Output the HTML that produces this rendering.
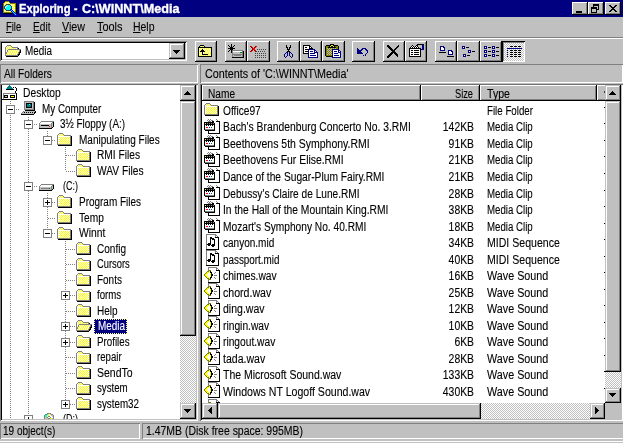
<!DOCTYPE html>
<html lang="en"><head><meta charset="utf-8"><title>Exploring - C:\WINNT\Media</title>
<style>
*{box-sizing:border-box;margin:0;padding:0}
html,body{width:623px;height:443px;overflow:hidden;background:#c0c0c0}
body{font-family:"Liberation Sans",sans-serif;font-size:12.5px;color:#000;position:relative}
#w{position:absolute;left:0;top:0;width:623px;height:443px;background:#c0c0c0;overflow:hidden;will-change:transform}
.a,.t,.btn,.tb,.tbp,.pane,.combo,.lbl,.hd,.track,svg{position:absolute}
.t{white-space:pre;line-height:16px;height:16px;transform-origin:0 0;-webkit-text-stroke:.12px currentColor}
.t.r{transform-origin:100% 0;text-align:right;width:80px}
.btn{background:#c0c0c0;box-shadow:inset -1px -1px #000,inset 1px 1px #c0c0c0,inset -2px -2px #808080,inset 2px 2px #fff}
.tb{background:#c0c0c0;box-shadow:inset -1px -1px #000,inset 1px 1px #fff,inset -2px -2px #808080}
.tbp{box-shadow:inset 1px 1px #000,inset -1px -1px #fff,inset 2px 2px #808080}
.pane{background:#fff;box-shadow:inset 0 1px #707070,inset 1px 0 #808080,inset 0 -1px #fff,inset -1px 0 #fff,inset 2px 0 #000,inset 0 -2px #c0c0c0,inset -2px 0 #c0c0c0}
.combo{background:#fff;box-shadow:inset 1px 1px #808080,inset -1px -1px #fff,inset 2px 2px #000,inset -2px -2px #c0c0c0}
.lbl{box-shadow:inset 1px 1px #808080,inset -1px -1px #fff}
.hd{background:#c0c0c0;box-shadow:inset -1px -1px #000,inset 1px 1px #fff,inset -2px -2px #808080}
.track,.tbp{background-color:#fff;background-image:linear-gradient(45deg,#c0c0c0 25%,transparent 25%,transparent 75%,#c0c0c0 75%),linear-gradient(45deg,#c0c0c0 25%,transparent 25%,transparent 75%,#c0c0c0 75%);background-size:2px 2px;background-position:0 0,1px 1px}
.clip{position:absolute;overflow:hidden}
u{text-decoration:underline}
</style></head>
<body>
<div id="w">
<div class="a" style="left:0px;top:0px;width:623px;height:17px;background:#000080"></div>
<svg style="left:2px;top:1px" width="16" height="16" viewBox="0 0 16 16" shape-rendering="crispEdges"><path fill="#808000" d="M3 0h4v1h-4zM2 1h1v1h-1zM7 1h1v1h-1zM1 2h1v1h-1zM8 2h6v1h-6zM1 3h1v1h-1zM13 3h1v1h-1zM1 4h1v1h-1zM13 4h1v1h-1zM1 5h1v1h-1zM13 5h1v1h-1zM1 6h1v1h-1zM13 6h1v1h-1zM1 7h1v1h-1zM13 7h1v1h-1zM1 8h1v1h-1zM13 8h1v1h-1zM1 9h1v1h-1zM13 9h1v1h-1zM1 10h1v1h-1zM13 10h1v1h-1zM1 11h9v1h-9zM13 11h1v1h-1z"/><path fill="#ff0" d="M3 1h1v1h-1zM5 1h1v1h-1zM2 2h1v1h-1zM4 2h1v1h-1zM6 2h1v1h-1zM3 3h1v1h-1zM8 3h1v1h-1zM10 3h1v1h-1zM12 3h1v1h-1zM2 4h1v1h-1zM10 4h1v1h-1zM12 4h1v1h-1zM10 5h1v1h-1zM12 5h1v1h-1zM11 6h1v1h-1zM10 7h1v1h-1zM12 7h1v1h-1zM2 8h1v1h-1zM11 8h1v1h-1zM3 9h1v1h-1zM12 9h1v1h-1zM2 10h1v1h-1zM4 10h1v1h-1zM6 10h1v1h-1zM8 10h1v1h-1zM12 10h1v1h-1z"/><path fill="#fff" d="M4 1h1v1h-1zM6 1h1v1h-1zM3 2h1v1h-1zM5 2h1v1h-1zM7 2h1v1h-1zM2 3h1v1h-1zM9 3h1v1h-1zM11 3h1v1h-1zM5 4h1v1h-1zM9 4h1v1h-1zM11 4h1v1h-1zM4 5h1v1h-1zM11 5h1v1h-1zM3 6h1v1h-1zM10 6h1v1h-1zM12 6h1v1h-1zM11 7h1v1h-1zM10 8h1v1h-1zM12 8h1v1h-1zM2 9h1v1h-1zM11 9h1v1h-1zM3 10h1v1h-1zM5 10h1v1h-1zM7 10h1v1h-1z"/><path fill="#404040" d="M4 3h4v1h-4zM3 4h1v1h-1zM8 4h1v1h-1zM2 5h1v1h-1zM9 5h1v1h-1zM2 6h1v1h-1zM9 6h1v1h-1zM2 7h1v1h-1zM9 7h1v1h-1zM3 8h1v1h-1zM8 8h1v1h-1zM4 9h4v1h-4z"/><path fill="#000" d="M14 3h1v1h-1zM14 4h1v1h-1zM14 5h1v1h-1zM14 6h1v1h-1zM14 7h1v1h-1zM14 8h1v1h-1zM14 9h1v1h-1zM14 10h1v1h-1zM14 11h1v1h-1zM2 12h9v1h-9zM14 12h1v1h-1z"/><path fill="#0ff" d="M4 4h1v1h-1zM6 4h2v1h-2zM3 5h1v1h-1zM5 5h4v1h-4zM4 6h5v1h-5zM3 7h6v1h-6zM4 8h4v1h-4zM9 9h1v1h-1zM10 10h1v1h-1zM11 11h1v1h-1zM12 12h1v1h-1zM13 13h1v1h-1z"/><path fill="#00f" d="M9 8h1v1h-1zM8 9h1v1h-1zM10 9h1v1h-1zM9 10h1v1h-1zM11 10h1v1h-1zM10 11h1v1h-1zM12 11h1v1h-1zM11 12h1v1h-1zM13 12h1v1h-1zM12 13h1v1h-1zM14 13h1v1h-1zM13 14h2v1h-2z"/></svg>
<div class="t" style="left:19px;top:1px;transform:scaleX(0.893);color:#fff;font-weight:bold;-webkit-text-stroke:.35px #fff">Exploring</div>
<div class="t" style="left:74px;top:1px;transform:scaleX(0.830);color:#fff;font-weight:bold;-webkit-text-stroke:.35px #fff">-</div>
<div class="t" style="left:82px;top:1px;transform:scaleX(1.010);color:#fff;font-weight:bold;-webkit-text-stroke:.35px #fff">C:\WINNT\Media</div>
<div class="tb" style="left:572px;top:2px;width:16px;height:13px"></div>
<svg style="left:572px;top:2px" width="16" height="13" viewBox="0 0 16 13" shape-rendering="crispEdges"><path fill="#000" d="M4 9h6v1h-6zM4 10h6v1h-6z"/></svg>
<div class="tb" style="left:588px;top:2px;width:16px;height:13px"></div>
<svg style="left:588px;top:2px" width="16" height="13" viewBox="0 0 16 13" shape-rendering="crispEdges"><path fill="#000" d="M5 2h6v1h-6zM5 3h6v1h-6zM5 4h1v1h-1zM10 4h1v1h-1zM3 5h6v1h-6zM10 5h1v1h-1zM3 6h6v1h-6zM10 6h1v1h-1zM3 7h1v1h-1zM8 7h3v1h-3zM3 8h1v1h-1zM8 8h1v1h-1zM3 9h1v1h-1zM8 9h1v1h-1zM3 10h6v1h-6z"/></svg>
<div class="tb" style="left:605px;top:2px;width:16px;height:13px"></div>
<svg style="left:605px;top:2px" width="16" height="13" viewBox="0 0 16 13" shape-rendering="crispEdges"><path fill="#000" d="M4 3h2v1h-2zM10 3h2v1h-2zM5 4h2v1h-2zM9 4h2v1h-2zM6 5h4v1h-4zM7 6h2v1h-2zM6 7h4v1h-4zM5 8h2v1h-2zM9 8h2v1h-2zM4 9h2v1h-2zM10 9h2v1h-2z"/></svg>
<div class="t" style="left:6px;top:19px;transform:scaleX(0.754)"><u>F</u>ile</div>
<div class="t" style="left:33px;top:19px;transform:scaleX(0.812)"><u>E</u>dit</div>
<div class="t" style="left:62px;top:19px;transform:scaleX(0.856)"><u>V</u>iew</div>
<div class="t" style="left:97px;top:19px;transform:scaleX(0.874)"><u>T</u>ools</div>
<div class="t" style="left:133px;top:19px;transform:scaleX(0.836)"><u>H</u>elp</div>
<div class="a" style="left:0px;top:37px;width:623px;height:1px;background:#808080"></div>
<div class="a" style="left:0px;top:38px;width:623px;height:1px;background:#fff"></div>
<div class="combo" style="left:0px;top:41px;width:187px;height:20px"></div>
<svg style="left:5px;top:43px" width="16" height="16" viewBox="0 0 16 16" shape-rendering="crispEdges"><path fill="#808080" d="M2 2h4v1h-4zM1 3h1v1h-1zM6 3h1v1h-1zM0 4h1v1h-1zM7 4h6v1h-6zM0 5h1v1h-1zM12 5h1v1h-1zM0 6h1v1h-1zM3 6h13v1h-13zM0 7h1v1h-1zM2 7h1v1h-1zM14 7h1v1h-1zM0 8h1v1h-1zM2 8h1v1h-1zM14 8h1v1h-1zM0 9h2v1h-2zM13 9h1v1h-1zM0 10h2v1h-2zM13 10h1v1h-1zM0 11h1v1h-1zM12 11h1v1h-1zM0 12h13v1h-13z"/><path fill="#fff" d="M2 3h1v1h-1zM4 3h1v1h-1zM1 4h1v1h-1zM3 4h1v1h-1zM5 4h1v1h-1zM1 5h1v1h-1zM3 5h1v1h-1zM5 5h1v1h-1zM7 5h1v1h-1zM9 5h1v1h-1zM11 5h1v1h-1zM1 6h1v1h-1zM1 7h1v1h-1zM3 7h1v1h-1zM5 7h1v1h-1zM7 7h1v1h-1zM9 7h1v1h-1zM11 7h1v1h-1zM13 7h1v1h-1zM1 8h1v1h-1zM4 8h1v1h-1zM6 8h1v1h-1zM8 8h1v1h-1zM10 8h1v1h-1zM12 8h1v1h-1zM2 9h1v1h-1zM4 9h1v1h-1zM6 9h1v1h-1zM8 9h1v1h-1zM10 9h1v1h-1zM12 9h1v1h-1zM3 10h1v1h-1zM5 10h1v1h-1zM7 10h1v1h-1zM9 10h1v1h-1zM11 10h1v1h-1zM1 11h1v1h-1zM3 11h1v1h-1zM5 11h1v1h-1zM7 11h1v1h-1zM9 11h1v1h-1zM11 11h1v1h-1z"/><path fill="#ff0" d="M3 3h1v1h-1zM5 3h1v1h-1zM2 4h1v1h-1zM4 4h1v1h-1zM6 4h1v1h-1zM2 5h1v1h-1zM4 5h1v1h-1zM6 5h1v1h-1zM8 5h1v1h-1zM10 5h1v1h-1zM2 6h1v1h-1zM4 7h1v1h-1zM6 7h1v1h-1zM8 7h1v1h-1zM10 7h1v1h-1zM12 7h1v1h-1zM3 8h1v1h-1zM5 8h1v1h-1zM7 8h1v1h-1zM9 8h1v1h-1zM11 8h1v1h-1zM13 8h1v1h-1zM3 9h1v1h-1zM5 9h1v1h-1zM7 9h1v1h-1zM9 9h1v1h-1zM11 9h1v1h-1zM2 10h1v1h-1zM4 10h1v1h-1zM6 10h1v1h-1zM8 10h1v1h-1zM10 10h1v1h-1zM12 10h1v1h-1zM2 11h1v1h-1zM4 11h1v1h-1zM6 11h1v1h-1zM8 11h1v1h-1zM10 11h1v1h-1z"/><path fill="#000" d="M13 5h1v1h-1zM15 7h1v1h-1zM15 8h1v1h-1zM14 9h2v1h-2zM14 10h1v1h-1zM13 11h2v1h-2zM13 12h1v1h-1zM1 13h12v1h-12z"/></svg>
<div class="t" style="left:25px;top:43px;transform:scaleX(0.793)">Media</div>
<div class="btn" style="left:169px;top:43px;width:16px;height:16px"></div>
<svg style="left:173px;top:50px" width="7" height="4" viewBox="0 0 7 4" shape-rendering="crispEdges"><path fill="#000" d="M0 0h7v1h-7zM1 1h5v1h-5zM2 2h3v1h-3zM3 3h1v1h-1z"/></svg>
<div class="tb" style="left:195px;top:41px;width:22px;height:21px"></div>
<svg style="left:198px;top:43px" width="16" height="16" viewBox="0 0 16 16" shape-rendering="crispEdges"><path fill="#000" d="M2 2h4v1h-4zM1 3h1v1h-1zM6 3h1v1h-1zM0 4h14v1h-14zM0 5h1v1h-1zM13 5h1v1h-1zM0 6h1v1h-1zM4 6h1v1h-1zM13 6h1v1h-1zM0 7h1v1h-1zM3 7h3v1h-3zM13 7h1v1h-1zM0 8h1v1h-1zM2 8h5v1h-5zM13 8h1v1h-1zM0 9h1v1h-1zM4 9h1v1h-1zM13 9h1v1h-1zM0 10h1v1h-1zM4 10h1v1h-1zM13 10h1v1h-1zM0 11h1v1h-1zM4 11h6v1h-6zM13 11h1v1h-1zM0 12h1v1h-1zM13 12h1v1h-1zM0 13h14v1h-14z"/><path fill="#ff0" d="M2 3h1v1h-1zM4 3h1v1h-1zM2 5h1v1h-1zM4 5h1v1h-1zM6 5h1v1h-1zM8 5h1v1h-1zM10 5h1v1h-1zM12 5h1v1h-1zM1 6h1v1h-1zM3 6h1v1h-1zM6 6h1v1h-1zM8 6h1v1h-1zM10 6h1v1h-1zM12 6h1v1h-1zM2 7h1v1h-1zM7 7h1v1h-1zM9 7h1v1h-1zM11 7h1v1h-1zM1 8h1v1h-1zM7 8h1v1h-1zM9 8h1v1h-1zM11 8h1v1h-1zM2 9h1v1h-1zM6 9h1v1h-1zM8 9h1v1h-1zM10 9h1v1h-1zM12 9h1v1h-1zM1 10h1v1h-1zM3 10h1v1h-1zM6 10h1v1h-1zM8 10h1v1h-1zM10 10h1v1h-1zM12 10h1v1h-1zM2 11h1v1h-1zM10 11h1v1h-1zM12 11h1v1h-1zM1 12h1v1h-1zM3 12h1v1h-1zM5 12h1v1h-1zM7 12h1v1h-1zM9 12h1v1h-1zM11 12h1v1h-1z"/><path fill="#fff" d="M3 3h1v1h-1zM5 3h1v1h-1zM1 5h1v1h-1zM3 5h1v1h-1zM5 5h1v1h-1zM7 5h1v1h-1zM9 5h1v1h-1zM11 5h1v1h-1zM2 6h1v1h-1zM5 6h1v1h-1zM7 6h1v1h-1zM9 6h1v1h-1zM11 6h1v1h-1zM1 7h1v1h-1zM6 7h1v1h-1zM8 7h1v1h-1zM10 7h1v1h-1zM12 7h1v1h-1zM8 8h1v1h-1zM10 8h1v1h-1zM12 8h1v1h-1zM1 9h1v1h-1zM3 9h1v1h-1zM5 9h1v1h-1zM7 9h1v1h-1zM9 9h1v1h-1zM11 9h1v1h-1zM2 10h1v1h-1zM5 10h1v1h-1zM7 10h1v1h-1zM9 10h1v1h-1zM11 10h1v1h-1zM1 11h1v1h-1zM3 11h1v1h-1zM11 11h1v1h-1zM2 12h1v1h-1zM4 12h1v1h-1zM6 12h1v1h-1zM8 12h1v1h-1zM10 12h1v1h-1zM12 12h1v1h-1z"/></svg>
<div class="tb" style="left:225px;top:41px;width:22px;height:21px"></div>
<svg style="left:228px;top:43px" width="16" height="16" viewBox="0 0 16 16" shape-rendering="crispEdges"><path fill="#000" d="M3 1h1v1h-1zM0 2h1v1h-1zM3 2h1v1h-1zM6 2h1v1h-1zM1 3h1v1h-1zM3 3h1v1h-1zM5 3h1v1h-1zM2 4h3v1h-3zM0 5h7v1h-7zM2 6h3v1h-3zM1 7h1v1h-1zM3 7h1v1h-1zM0 8h1v1h-1zM3 8h1v1h-1zM15 8h1v1h-1zM3 9h1v1h-1zM15 9h1v1h-1zM15 10h1v1h-1zM15 11h1v1h-1zM15 12h1v1h-1zM15 13h1v1h-1zM4 14h12v1h-12z"/><path fill="#808080" d="M4 7h11v1h-11zM4 8h1v1h-1zM14 8h1v1h-1zM4 9h1v1h-1zM14 9h1v1h-1zM4 10h1v1h-1zM14 10h1v1h-1zM4 11h11v1h-11zM4 12h1v1h-1zM6 12h7v1h-7zM14 12h1v1h-1zM4 13h1v1h-1zM14 13h1v1h-1z"/><path fill="#fff" d="M5 8h9v1h-9z"/><path fill="#c0c0c0" d="M5 9h7v1h-7zM5 10h9v1h-9zM5 12h1v1h-1zM13 12h1v1h-1zM5 13h9v1h-9z"/><path fill="#008000" d="M12 9h2v1h-2z"/></svg>
<div class="tb" style="left:247px;top:41px;width:23px;height:21px"></div>
<svg style="left:250px;top:43px" width="16" height="16" viewBox="0 0 16 16" shape-rendering="crispEdges"><path fill="#800000" d="M0 3h1v1h-1zM5 3h1v1h-1zM1 4h1v1h-1zM4 4h1v1h-1zM2 5h1v1h-1zM2 6h1v1h-1zM1 7h1v1h-1zM4 7h1v1h-1zM0 8h1v1h-1zM5 8h1v1h-1z"/><path fill="#f00" d="M1 3h1v1h-1zM6 3h1v1h-1zM2 4h1v1h-1zM5 4h1v1h-1zM3 5h2v1h-2zM3 6h2v1h-2zM2 7h1v1h-1zM5 7h1v1h-1zM1 8h1v1h-1z"/><path fill="#404040" d="M7 6h1v1h-1zM9 6h1v1h-1zM11 6h1v1h-1zM13 6h1v1h-1zM15 6h1v1h-1zM6 8h1v1h-1zM8 8h1v1h-1zM10 8h1v1h-1zM12 8h1v1h-1zM14 8h1v1h-1zM5 10h1v1h-1zM7 10h1v1h-1zM9 10h1v1h-1zM11 10h1v1h-1zM13 10h1v1h-1zM15 10h1v1h-1zM5 12h1v1h-1zM7 12h1v1h-1zM9 12h1v1h-1zM11 12h1v1h-1zM13 12h1v1h-1zM15 12h1v1h-1zM5 14h1v1h-1zM7 14h1v1h-1zM9 14h1v1h-1zM11 14h1v1h-1zM13 14h1v1h-1zM15 14h1v1h-1z"/></svg>
<div class="tb" style="left:277px;top:41px;width:23px;height:21px"></div>
<svg style="left:280px;top:43px" width="16" height="16" viewBox="0 0 16 16" shape-rendering="crispEdges"><path fill="#000" d="M6 2h1v1h-1zM10 2h1v1h-1zM6 3h1v1h-1zM10 3h1v1h-1zM6 4h2v1h-2zM9 4h2v1h-2zM7 5h1v1h-1zM9 5h1v1h-1zM7 6h3v1h-3zM8 7h1v1h-1zM7 8h3v1h-3z"/><path fill="#000080" d="M6 9h2v1h-2zM9 9h2v1h-2zM5 10h1v1h-1zM7 10h1v1h-1zM9 10h1v1h-1zM11 10h1v1h-1zM4 11h1v1h-1zM7 11h1v1h-1zM9 11h1v1h-1zM12 11h1v1h-1zM4 12h1v1h-1zM7 12h1v1h-1zM9 12h1v1h-1zM12 12h1v1h-1zM4 13h1v1h-1zM6 13h1v1h-1zM10 13h1v1h-1zM12 13h1v1h-1zM5 14h1v1h-1zM11 14h1v1h-1z"/></svg>
<div class="tb" style="left:300px;top:41px;width:22px;height:21px"></div>
<svg style="left:303px;top:43px" width="16" height="16" viewBox="0 0 16 16" shape-rendering="crispEdges"><path fill="#000" d="M0 2h7v1h-7zM0 3h1v1h-1zM6 3h2v1h-2zM0 4h1v1h-1zM2 4h2v1h-2zM6 4h1v1h-1zM8 4h1v1h-1zM0 5h1v1h-1zM6 5h4v1h-4zM0 6h1v1h-1zM2 6h3v1h-3zM0 7h1v1h-1zM0 8h1v1h-1zM2 8h3v1h-3zM0 9h1v1h-1zM0 10h5v1h-5z"/><path fill="#fff" d="M1 3h5v1h-5zM1 4h1v1h-1zM4 4h2v1h-2zM7 4h1v1h-1zM1 5h5v1h-5zM1 6h1v1h-1zM1 7h4v1h-4zM6 7h5v1h-5zM1 8h1v1h-1zM6 8h1v1h-1zM10 8h1v1h-1zM12 8h1v1h-1zM1 9h4v1h-4zM6 9h5v1h-5zM6 10h1v1h-1zM12 10h2v1h-2zM6 11h8v1h-8zM6 12h1v1h-1zM13 12h1v1h-1zM6 13h8v1h-8z"/><path fill="#000080" d="M5 6h7v1h-7zM5 7h1v1h-1zM11 7h2v1h-2zM5 8h1v1h-1zM7 8h3v1h-3zM11 8h1v1h-1zM13 8h1v1h-1zM5 9h1v1h-1zM11 9h4v1h-4zM5 10h1v1h-1zM7 10h5v1h-5zM14 10h1v1h-1zM5 11h1v1h-1zM14 11h1v1h-1zM5 12h1v1h-1zM7 12h6v1h-6zM14 12h1v1h-1zM5 13h1v1h-1zM14 13h1v1h-1zM5 14h10v1h-10z"/></svg>
<div class="tb" style="left:322px;top:41px;width:23px;height:21px"></div>
<svg style="left:325px;top:43px" width="16" height="16" viewBox="0 0 16 16" shape-rendering="crispEdges"><path fill="#000" d="M5 1h4v1h-4zM1 2h5v1h-5zM8 2h5v1h-5zM0 3h1v1h-1zM4 3h1v1h-1zM6 3h2v1h-2zM9 3h1v1h-1zM13 3h1v1h-1zM0 4h1v1h-1zM3 4h8v1h-8zM13 4h1v1h-1zM0 5h1v1h-1zM13 5h1v1h-1zM0 6h1v1h-1zM0 7h1v1h-1zM0 8h1v1h-1zM0 9h1v1h-1zM0 10h1v1h-1zM0 11h1v1h-1zM0 12h1v1h-1zM1 13h6v1h-6z"/><path fill="#ff0" d="M6 2h2v1h-2zM5 3h1v1h-1zM8 3h1v1h-1z"/><path fill="#808000" d="M1 3h3v1h-3zM10 3h3v1h-3zM1 4h2v1h-2zM11 4h2v1h-2zM1 5h1v1h-1zM3 5h1v1h-1zM5 5h1v1h-1zM7 5h1v1h-1zM9 5h1v1h-1zM11 5h2v1h-2zM1 6h2v1h-2zM4 6h1v1h-1zM6 6h1v1h-1zM1 7h1v1h-1zM3 7h1v1h-1zM5 7h1v1h-1zM1 8h2v1h-2zM4 8h1v1h-1zM6 8h1v1h-1zM1 9h1v1h-1zM3 9h1v1h-1zM5 9h1v1h-1zM1 10h2v1h-2zM4 10h1v1h-1zM6 10h1v1h-1zM1 11h1v1h-1zM3 11h1v1h-1zM5 11h1v1h-1zM1 12h6v1h-6z"/><path fill="#c0c0c0" d="M2 5h1v1h-1zM4 5h1v1h-1zM6 5h1v1h-1zM8 5h1v1h-1zM10 5h1v1h-1zM3 6h1v1h-1zM5 6h1v1h-1zM2 7h1v1h-1zM4 7h1v1h-1zM6 7h1v1h-1zM3 8h1v1h-1zM5 8h1v1h-1zM2 9h1v1h-1zM4 9h1v1h-1zM6 9h1v1h-1zM3 10h1v1h-1zM5 10h1v1h-1zM2 11h1v1h-1zM4 11h1v1h-1zM6 11h1v1h-1z"/><path fill="#000080" d="M7 6h7v1h-7zM7 7h1v1h-1zM13 7h2v1h-2zM7 8h1v1h-1zM9 8h3v1h-3zM13 8h1v1h-1zM15 8h1v1h-1zM7 9h1v1h-1zM13 9h3v1h-3zM7 10h1v1h-1zM9 10h4v1h-4zM15 10h1v1h-1zM7 11h1v1h-1zM15 11h1v1h-1zM7 12h1v1h-1zM9 12h5v1h-5zM15 12h1v1h-1zM7 13h1v1h-1zM15 13h1v1h-1zM7 14h9v1h-9z"/><path fill="#fff" d="M8 7h5v1h-5zM8 8h1v1h-1zM12 8h1v1h-1zM14 8h1v1h-1zM8 9h5v1h-5zM8 10h1v1h-1zM13 10h2v1h-2zM8 11h7v1h-7zM8 12h1v1h-1zM14 12h1v1h-1zM8 13h7v1h-7z"/></svg>
<div class="tb" style="left:352px;top:41px;width:23px;height:21px"></div>
<svg style="left:355px;top:43px" width="16" height="16" viewBox="0 0 16 16" shape-rendering="crispEdges"><path fill="#000080" d="M2 5h1v1h-1zM7 5h4v1h-4zM2 6h2v1h-2zM6 6h2v1h-2zM10 6h2v1h-2zM2 7h5v1h-5zM11 7h2v1h-2zM2 8h4v1h-4zM12 8h1v1h-1zM2 9h5v1h-5zM12 9h1v1h-1zM2 10h6v1h-6zM11 10h1v1h-1zM10 11h1v1h-1zM8 12h1v1h-1zM10 12h1v1h-1z"/></svg>
<div class="tb" style="left:383px;top:41px;width:22px;height:21px"></div>
<svg style="left:386px;top:43px" width="16" height="16" viewBox="0 0 16 16" shape-rendering="crispEdges"><path fill="#000" d="M1 2h2v1h-2zM12 2h1v1h-1zM1 3h3v1h-3zM11 3h2v1h-2zM2 4h3v1h-3zM10 4h2v1h-2zM3 5h3v1h-3zM9 5h2v1h-2zM4 6h3v1h-3zM8 6h2v1h-2zM5 7h4v1h-4zM6 8h3v1h-3zM5 9h5v1h-5zM4 10h3v1h-3zM8 10h3v1h-3zM3 11h3v1h-3zM9 11h3v1h-3zM2 12h3v1h-3zM10 12h2v1h-2zM1 13h3v1h-3zM11 13h1v1h-1zM1 14h2v1h-2z"/></svg>
<div class="tb" style="left:405px;top:41px;width:22px;height:21px"></div>
<svg style="left:408px;top:43px" width="16" height="16" viewBox="0 0 16 16" shape-rendering="crispEdges"><path fill="#000" d="M9 1h7v1h-7zM4 2h1v1h-1zM8 2h2v1h-2zM3 3h1v1h-1zM5 3h1v1h-1zM7 3h1v1h-1zM9 3h1v1h-1zM2 4h1v1h-1zM4 4h1v1h-1zM6 4h1v1h-1zM8 4h1v1h-1zM10 4h1v1h-1zM1 5h12v1h-12zM1 6h1v1h-1zM12 6h1v1h-1zM1 7h1v1h-1zM3 7h2v1h-2zM6 7h5v1h-5zM12 7h1v1h-1zM1 8h1v1h-1zM12 8h1v1h-1zM1 9h1v1h-1zM3 9h2v1h-2zM6 9h5v1h-5zM12 9h1v1h-1zM1 10h1v1h-1zM12 10h1v1h-1zM1 11h1v1h-1zM3 11h2v1h-2zM6 11h5v1h-5zM12 11h1v1h-1zM1 12h1v1h-1zM12 12h1v1h-1zM1 13h12v1h-12z"/><path fill="#c0c0c0" d="M10 2h4v1h-4zM10 3h4v1h-4zM11 4h3v1h-3zM13 5h1v1h-1z"/><path fill="#000080" d="M14 2h2v1h-2zM14 3h2v1h-2zM14 4h2v1h-2zM14 5h2v1h-2zM13 6h3v1h-3z"/><path fill="#fff" d="M4 3h1v1h-1zM8 3h1v1h-1zM3 4h1v1h-1zM5 4h1v1h-1zM7 4h1v1h-1zM9 4h1v1h-1zM2 6h10v1h-10zM2 7h1v1h-1zM5 7h1v1h-1zM11 7h1v1h-1zM2 8h10v1h-10zM2 9h1v1h-1zM5 9h1v1h-1zM11 9h1v1h-1zM2 10h10v1h-10zM2 11h1v1h-1zM5 11h1v1h-1zM11 11h1v1h-1zM2 12h10v1h-10z"/></svg>
<div class="tb" style="left:435px;top:41px;width:22px;height:21px"></div>
<svg style="left:438px;top:43px" width="16" height="16" viewBox="0 0 16 16" shape-rendering="crispEdges"><path fill="#000080" d="M2 3h4v1h-4zM2 4h1v1h-1zM5 4h2v1h-2zM2 5h1v1h-1zM6 5h1v1h-1zM2 6h1v1h-1zM6 6h1v1h-1zM2 7h5v1h-5zM10 7h4v1h-4zM10 8h1v1h-1zM13 8h2v1h-2zM10 9h1v1h-1zM14 9h1v1h-1zM10 10h1v1h-1zM14 10h1v1h-1zM10 11h5v1h-5z"/><path fill="#fff" d="M3 4h2v1h-2zM3 5h3v1h-3zM3 6h3v1h-3zM11 8h2v1h-2zM11 9h3v1h-3zM11 10h3v1h-3z"/><path fill="#000" d="M1 9h7v1h-7zM9 13h7v1h-7z"/></svg>
<div class="tb" style="left:457px;top:41px;width:23px;height:21px"></div>
<svg style="left:460px;top:43px" width="16" height="16" viewBox="0 0 16 16" shape-rendering="crispEdges"><path fill="#000080" d="M2 3h3v1h-3zM2 4h1v1h-1zM4 4h1v1h-1zM2 5h3v1h-3zM8 7h3v1h-3zM8 8h1v1h-1zM10 8h1v1h-1zM8 9h3v1h-3zM3 11h3v1h-3zM3 12h1v1h-1zM5 12h1v1h-1zM3 13h3v1h-3z"/><path fill="#fff" d="M3 4h1v1h-1zM9 8h1v1h-1zM4 12h1v1h-1z"/><path fill="#000" d="M6 4h3v1h-3zM12 8h3v1h-3zM7 12h3v1h-3z"/></svg>
<div class="tb" style="left:480px;top:41px;width:22px;height:21px"></div>
<svg style="left:483px;top:43px" width="16" height="16" viewBox="0 0 16 16" shape-rendering="crispEdges"><path fill="#000080" d="M1 3h3v1h-3zM9 3h3v1h-3zM1 4h1v1h-1zM3 4h1v1h-1zM9 4h1v1h-1zM11 4h1v1h-1zM1 5h3v1h-3zM9 5h3v1h-3zM1 7h3v1h-3zM9 7h3v1h-3zM1 8h1v1h-1zM3 8h1v1h-1zM9 8h1v1h-1zM11 8h1v1h-1zM1 9h3v1h-3zM9 9h3v1h-3zM1 11h3v1h-3zM9 11h3v1h-3zM1 12h1v1h-1zM3 12h1v1h-1zM9 12h1v1h-1zM11 12h1v1h-1zM1 13h3v1h-3zM9 13h3v1h-3z"/><path fill="#fff" d="M2 4h1v1h-1zM10 4h1v1h-1zM2 8h1v1h-1zM10 8h1v1h-1zM2 12h1v1h-1zM10 12h1v1h-1z"/><path fill="#000" d="M5 4h3v1h-3zM13 4h3v1h-3zM5 8h3v1h-3zM13 8h3v1h-3zM5 12h3v1h-3zM13 12h3v1h-3z"/></svg>
<div class="tbp" style="left:502px;top:41px;width:23px;height:21px"></div>
<svg style="left:506px;top:44px" width="16" height="16" viewBox="0 0 16 16" shape-rendering="crispEdges"><path fill="#000" d="M4 2h3v1h-3zM8 2h3v1h-3zM12 2h3v1h-3zM4 6h3v1h-3zM8 6h3v1h-3zM12 6h3v1h-3zM4 8h3v1h-3zM8 8h3v1h-3zM12 8h3v1h-3zM4 10h3v1h-3zM8 10h3v1h-3zM12 10h3v1h-3zM4 12h3v1h-3zM8 12h3v1h-3zM12 12h3v1h-3z"/><path fill="#000080" d="M1 4h15v1h-15zM1 6h1v1h-1zM1 8h1v1h-1zM1 10h1v1h-1zM1 12h1v1h-1z"/></svg>
<div class="lbl" style="left:0px;top:64px;width:198px;height:19px"></div>
<div class="t" style="left:4px;top:66px;transform:scaleX(0.810)">All Folders</div>
<div class="lbl" style="left:200px;top:64px;width:423px;height:19px"></div>
<div class="t" style="left:205px;top:66px;transform:scaleX(0.861)">Contents of &#x27;C:\WINNT\Media&#x27;</div>
<div class="pane" style="left:0px;top:84px;width:198px;height:337px"></div>
<div class="clip" style="left:2px;top:85px;width:194px;height:334px">
<div class="a" style="left:8px;top:16px;width:1px;height:320px;background-image:linear-gradient(#808080 50%,transparent 50%);background-size:1px 2px"></div>
<div class="a" style="left:26px;top:32px;width:1px;height:304px;background-image:linear-gradient(#808080 50%,transparent 50%);background-size:1px 2px"></div>
<div class="a" style="left:45px;top:46px;width:1px;height:9px;background-image:linear-gradient(#808080 50%,transparent 50%);background-size:1px 2px"></div>
<div class="a" style="left:63px;top:62px;width:1px;height:24px;background-image:linear-gradient(#808080 50%,transparent 50%);background-size:1px 2px"></div>
<div class="a" style="left:45px;top:108px;width:1px;height:40px;background-image:linear-gradient(#808080 50%,transparent 50%);background-size:1px 2px"></div>
<div class="a" style="left:63px;top:156px;width:1px;height:163px;background-image:linear-gradient(#808080 50%,transparent 50%);background-size:1px 2px"></div>
<svg style="left:0px;top:0px" width="16" height="16" viewBox="0 0 16 16" shape-rendering="crispEdges"><path fill="#008080" d="M7 0h1v1h-1zM6 1h3v1h-3zM5 2h5v1h-5zM5 3h6v1h-6z"/><path fill="#000" d="M11 2h1v1h-1zM13 2h1v1h-1zM14 3h1v1h-1zM4 4h8v1h-8zM14 4h1v1h-1zM14 5h1v1h-1zM13 6h1v1h-1zM13 7h1v1h-1zM14 8h1v1h-1zM14 9h1v1h-1zM2 10h4v1h-4zM8 10h5v1h-5zM14 10h1v1h-1zM2 11h1v1h-1zM5 11h1v1h-1zM8 11h1v1h-1zM12 11h1v1h-1zM14 11h1v1h-1zM2 12h4v1h-4zM8 12h5v1h-5zM14 12h1v1h-1zM14 13h1v1h-1zM0 14h15v1h-15z"/><path fill="#0ff" d="M4 3h1v1h-1z"/><path fill="#808080" d="M1 8h13v1h-13zM1 9h1v1h-1zM1 10h1v1h-1zM1 11h1v1h-1zM1 12h1v1h-1zM1 13h1v1h-1z"/><path fill="#fff" d="M2 9h12v1h-12zM6 10h2v1h-2zM13 10h1v1h-1zM6 11h2v1h-2zM13 11h1v1h-1zM6 12h2v1h-2zM13 12h1v1h-1zM2 13h12v1h-12z"/><path fill="#c0c0c0" d="M3 11h2v1h-2z"/><path fill="#ff0" d="M9 11h3v1h-3z"/></svg>
<div class="t" style="left:21px;top:0px;transform:scaleX(0.822)">Desktop</div>
<div class="a" style="left:9px;top:24px;width:9px;height:1px;background-image:linear-gradient(90deg,#808080 50%,transparent 50%);background-size:2px 1px;background-position:1px 0"></div>
<svg style="left:4px;top:20px" width="9" height="9" viewBox="0 0 9 9" shape-rendering="crispEdges"><path fill="#808080" d="M0 0h9v1h-9zM0 1h1v1h-1zM8 1h1v1h-1zM0 2h1v1h-1zM8 2h1v1h-1zM0 3h1v1h-1zM8 3h1v1h-1zM0 4h1v1h-1zM8 4h1v1h-1zM0 5h1v1h-1zM8 5h1v1h-1zM0 6h1v1h-1zM8 6h1v1h-1zM0 7h1v1h-1zM8 7h1v1h-1zM0 8h9v1h-9z"/><path fill="#fff" d="M1 1h7v1h-7zM1 2h7v1h-7zM1 3h7v1h-7zM1 4h1v1h-1zM7 4h1v1h-1zM1 5h7v1h-7zM1 6h7v1h-7zM1 7h7v1h-7z"/><path fill="#000" d="M2 4h5v1h-5z"/></svg>
<svg style="left:19px;top:15px" width="16" height="16" viewBox="0 0 16 16" shape-rendering="crispEdges"><path fill="#808080" d="M3 1h10v1h-10zM3 2h1v1h-1zM12 2h1v1h-1zM3 3h1v1h-1zM12 3h1v1h-1zM3 4h1v1h-1zM12 4h1v1h-1zM3 5h1v1h-1zM12 5h1v1h-1zM3 6h1v1h-1zM12 6h1v1h-1zM3 7h1v1h-1zM12 7h1v1h-1zM3 8h1v1h-1zM12 8h1v1h-1zM3 9h10v1h-10zM2 11h1v1h-1zM1 12h1v1h-1zM0 13h1v1h-1z"/><path fill="#c0c0c0" d="M4 2h8v1h-8zM4 3h1v1h-1zM11 3h1v1h-1zM4 4h1v1h-1zM11 4h1v1h-1zM4 5h1v1h-1zM11 5h1v1h-1zM4 6h1v1h-1zM11 6h1v1h-1zM4 7h1v1h-1zM11 7h1v1h-1zM4 8h8v1h-8zM3 11h11v1h-11zM2 12h1v1h-1zM4 12h1v1h-1zM6 12h1v1h-1zM8 12h1v1h-1zM10 12h1v1h-1zM12 12h1v1h-1zM1 13h12v1h-12z"/><path fill="#000" d="M13 2h1v1h-1zM5 3h6v1h-6zM13 3h1v1h-1zM5 4h1v1h-1zM10 4h1v1h-1zM13 4h1v1h-1zM5 5h1v1h-1zM10 5h1v1h-1zM13 5h1v1h-1zM5 6h1v1h-1zM10 6h1v1h-1zM13 6h1v1h-1zM5 7h6v1h-6zM13 7h1v1h-1zM13 8h1v1h-1zM13 9h1v1h-1zM4 10h10v1h-10zM14 11h1v1h-1zM3 12h1v1h-1zM5 12h1v1h-1zM7 12h1v1h-1zM9 12h1v1h-1zM11 12h1v1h-1zM13 12h2v1h-2zM13 13h1v1h-1zM0 14h13v1h-13z"/><path fill="#008080" d="M6 4h2v1h-2zM9 4h1v1h-1zM6 5h4v1h-4zM6 6h4v1h-4z"/><path fill="#0ff" d="M8 4h1v1h-1z"/></svg>
<div class="t" style="left:40px;top:16px;transform:scaleX(0.790)">My Computer</div>
<div class="a" style="left:27px;top:39px;width:8px;height:1px;background-image:linear-gradient(90deg,#808080 50%,transparent 50%);background-size:2px 1px;background-position:1px 0"></div>
<svg style="left:22px;top:35px" width="9" height="9" viewBox="0 0 9 9" shape-rendering="crispEdges"><path fill="#808080" d="M0 0h9v1h-9zM0 1h1v1h-1zM8 1h1v1h-1zM0 2h1v1h-1zM8 2h1v1h-1zM0 3h1v1h-1zM8 3h1v1h-1zM0 4h1v1h-1zM8 4h1v1h-1zM0 5h1v1h-1zM8 5h1v1h-1zM0 6h1v1h-1zM8 6h1v1h-1zM0 7h1v1h-1zM8 7h1v1h-1zM0 8h9v1h-9z"/><path fill="#fff" d="M1 1h7v1h-7zM1 2h7v1h-7zM1 3h7v1h-7zM1 4h1v1h-1zM7 4h1v1h-1zM1 5h7v1h-7zM1 6h7v1h-7zM1 7h7v1h-7z"/><path fill="#000" d="M2 4h5v1h-5z"/></svg>
<svg style="left:36px;top:31px" width="16" height="16" viewBox="0 0 16 16" shape-rendering="crispEdges"><path fill="#808080" d="M3 5h13v1h-13zM2 6h1v1h-1zM14 6h1v1h-1zM1 7h1v1h-1zM13 7h1v1h-1zM1 8h1v1h-1zM13 8h1v1h-1zM1 9h1v1h-1zM13 9h1v1h-1zM1 10h1v1h-1zM13 10h1v1h-1zM1 11h1v1h-1zM13 11h1v1h-1z"/><path fill="#fff" d="M3 6h11v1h-11zM2 7h11v1h-11z"/><path fill="#000" d="M15 6h1v1h-1zM15 7h1v1h-1zM15 8h1v1h-1zM3 9h8v1h-8zM15 9h1v1h-1zM15 10h1v1h-1zM14 11h1v1h-1zM1 12h13v1h-13z"/><path fill="#c0c0c0" d="M14 7h1v1h-1zM2 8h11v1h-11zM14 8h1v1h-1zM2 9h1v1h-1zM11 9h2v1h-2zM14 9h1v1h-1zM2 10h9v1h-9zM12 10h1v1h-1zM14 10h1v1h-1zM2 11h11v1h-11z"/><path fill="#f00" d="M11 10h1v1h-1z"/></svg>
<div class="t" style="left:58px;top:31px;transform:scaleX(0.794)">3½ Floppy (A:)</div>
<div class="a" style="left:45px;top:55px;width:9px;height:1px;background-image:linear-gradient(90deg,#808080 50%,transparent 50%);background-size:2px 1px;background-position:1px 0"></div>
<svg style="left:41px;top:51px" width="9" height="9" viewBox="0 0 9 9" shape-rendering="crispEdges"><path fill="#808080" d="M0 0h9v1h-9zM0 1h1v1h-1zM8 1h1v1h-1zM0 2h1v1h-1zM8 2h1v1h-1zM0 3h1v1h-1zM8 3h1v1h-1zM0 4h1v1h-1zM8 4h1v1h-1zM0 5h1v1h-1zM8 5h1v1h-1zM0 6h1v1h-1zM8 6h1v1h-1zM0 7h1v1h-1zM8 7h1v1h-1zM0 8h9v1h-9z"/><path fill="#fff" d="M1 1h7v1h-7zM1 2h7v1h-7zM1 3h7v1h-7zM1 4h1v1h-1zM7 4h1v1h-1zM1 5h7v1h-7zM1 6h7v1h-7zM1 7h7v1h-7z"/><path fill="#000" d="M2 4h5v1h-5z"/></svg>
<svg style="left:55px;top:46px" width="16" height="16" viewBox="0 0 16 16" shape-rendering="crispEdges"><path fill="#808080" d="M2 2h4v1h-4zM1 3h1v1h-1zM6 3h1v1h-1zM0 4h1v1h-1zM7 4h7v1h-7zM0 5h1v1h-1zM13 5h1v1h-1zM0 6h1v1h-1zM13 6h1v1h-1zM0 7h1v1h-1zM13 7h1v1h-1zM0 8h1v1h-1zM13 8h1v1h-1zM0 9h1v1h-1zM13 9h1v1h-1zM0 10h1v1h-1zM13 10h1v1h-1zM0 11h1v1h-1zM13 11h1v1h-1zM0 12h1v1h-1zM13 12h1v1h-1zM0 13h14v1h-14z"/><path fill="#fff" d="M2 3h1v1h-1zM4 3h1v1h-1zM1 4h1v1h-1zM3 4h1v1h-1zM5 4h1v1h-1zM1 5h12v1h-12zM1 6h1v1h-1zM3 6h1v1h-1zM5 6h1v1h-1zM7 6h1v1h-1zM9 6h1v1h-1zM11 6h1v1h-1zM1 7h2v1h-2zM4 7h1v1h-1zM6 7h1v1h-1zM8 7h1v1h-1zM10 7h1v1h-1zM12 7h1v1h-1zM1 8h1v1h-1zM3 8h1v1h-1zM5 8h1v1h-1zM7 8h1v1h-1zM9 8h1v1h-1zM11 8h1v1h-1zM1 9h2v1h-2zM4 9h1v1h-1zM6 9h1v1h-1zM8 9h1v1h-1zM10 9h1v1h-1zM12 9h1v1h-1zM1 10h1v1h-1zM3 10h1v1h-1zM5 10h1v1h-1zM7 10h1v1h-1zM9 10h1v1h-1zM11 10h1v1h-1zM1 11h2v1h-2zM4 11h1v1h-1zM6 11h1v1h-1zM8 11h1v1h-1zM10 11h1v1h-1zM12 11h1v1h-1zM1 12h1v1h-1zM3 12h1v1h-1zM5 12h1v1h-1zM7 12h1v1h-1zM9 12h1v1h-1zM11 12h1v1h-1z"/><path fill="#ff0" d="M3 3h1v1h-1zM5 3h1v1h-1zM2 4h1v1h-1zM4 4h1v1h-1zM6 4h1v1h-1zM2 6h1v1h-1zM4 6h1v1h-1zM6 6h1v1h-1zM8 6h1v1h-1zM10 6h1v1h-1zM12 6h1v1h-1zM3 7h1v1h-1zM5 7h1v1h-1zM7 7h1v1h-1zM9 7h1v1h-1zM11 7h1v1h-1zM2 8h1v1h-1zM4 8h1v1h-1zM6 8h1v1h-1zM8 8h1v1h-1zM10 8h1v1h-1zM12 8h1v1h-1zM3 9h1v1h-1zM5 9h1v1h-1zM7 9h1v1h-1zM9 9h1v1h-1zM11 9h1v1h-1zM2 10h1v1h-1zM4 10h1v1h-1zM6 10h1v1h-1zM8 10h1v1h-1zM10 10h1v1h-1zM12 10h1v1h-1zM3 11h1v1h-1zM5 11h1v1h-1zM7 11h1v1h-1zM9 11h1v1h-1zM11 11h1v1h-1zM2 12h1v1h-1zM4 12h1v1h-1zM6 12h1v1h-1zM8 12h1v1h-1zM10 12h1v1h-1zM12 12h1v1h-1z"/><path fill="#000" d="M14 5h1v1h-1zM14 6h1v1h-1zM14 7h1v1h-1zM14 8h1v1h-1zM14 9h1v1h-1zM14 10h1v1h-1zM14 11h1v1h-1zM14 12h1v1h-1zM14 13h1v1h-1zM1 14h14v1h-14z"/></svg>
<div class="t" style="left:77px;top:47px;transform:scaleX(0.801)">Manipulating Files</div>
<div class="a" style="left:63px;top:70px;width:10px;height:1px;background-image:linear-gradient(90deg,#808080 50%,transparent 50%);background-size:2px 1px;background-position:1px 0"></div>
<svg style="left:74px;top:62px" width="16" height="16" viewBox="0 0 16 16" shape-rendering="crispEdges"><path fill="#808080" d="M2 2h4v1h-4zM1 3h1v1h-1zM6 3h1v1h-1zM0 4h1v1h-1zM7 4h7v1h-7zM0 5h1v1h-1zM13 5h1v1h-1zM0 6h1v1h-1zM13 6h1v1h-1zM0 7h1v1h-1zM13 7h1v1h-1zM0 8h1v1h-1zM13 8h1v1h-1zM0 9h1v1h-1zM13 9h1v1h-1zM0 10h1v1h-1zM13 10h1v1h-1zM0 11h1v1h-1zM13 11h1v1h-1zM0 12h1v1h-1zM13 12h1v1h-1zM0 13h14v1h-14z"/><path fill="#fff" d="M2 3h1v1h-1zM4 3h1v1h-1zM1 4h1v1h-1zM3 4h1v1h-1zM5 4h1v1h-1zM1 5h12v1h-12zM1 6h1v1h-1zM3 6h1v1h-1zM5 6h1v1h-1zM7 6h1v1h-1zM9 6h1v1h-1zM11 6h1v1h-1zM1 7h2v1h-2zM4 7h1v1h-1zM6 7h1v1h-1zM8 7h1v1h-1zM10 7h1v1h-1zM12 7h1v1h-1zM1 8h1v1h-1zM3 8h1v1h-1zM5 8h1v1h-1zM7 8h1v1h-1zM9 8h1v1h-1zM11 8h1v1h-1zM1 9h2v1h-2zM4 9h1v1h-1zM6 9h1v1h-1zM8 9h1v1h-1zM10 9h1v1h-1zM12 9h1v1h-1zM1 10h1v1h-1zM3 10h1v1h-1zM5 10h1v1h-1zM7 10h1v1h-1zM9 10h1v1h-1zM11 10h1v1h-1zM1 11h2v1h-2zM4 11h1v1h-1zM6 11h1v1h-1zM8 11h1v1h-1zM10 11h1v1h-1zM12 11h1v1h-1zM1 12h1v1h-1zM3 12h1v1h-1zM5 12h1v1h-1zM7 12h1v1h-1zM9 12h1v1h-1zM11 12h1v1h-1z"/><path fill="#ff0" d="M3 3h1v1h-1zM5 3h1v1h-1zM2 4h1v1h-1zM4 4h1v1h-1zM6 4h1v1h-1zM2 6h1v1h-1zM4 6h1v1h-1zM6 6h1v1h-1zM8 6h1v1h-1zM10 6h1v1h-1zM12 6h1v1h-1zM3 7h1v1h-1zM5 7h1v1h-1zM7 7h1v1h-1zM9 7h1v1h-1zM11 7h1v1h-1zM2 8h1v1h-1zM4 8h1v1h-1zM6 8h1v1h-1zM8 8h1v1h-1zM10 8h1v1h-1zM12 8h1v1h-1zM3 9h1v1h-1zM5 9h1v1h-1zM7 9h1v1h-1zM9 9h1v1h-1zM11 9h1v1h-1zM2 10h1v1h-1zM4 10h1v1h-1zM6 10h1v1h-1zM8 10h1v1h-1zM10 10h1v1h-1zM12 10h1v1h-1zM3 11h1v1h-1zM5 11h1v1h-1zM7 11h1v1h-1zM9 11h1v1h-1zM11 11h1v1h-1zM2 12h1v1h-1zM4 12h1v1h-1zM6 12h1v1h-1zM8 12h1v1h-1zM10 12h1v1h-1zM12 12h1v1h-1z"/><path fill="#000" d="M14 5h1v1h-1zM14 6h1v1h-1zM14 7h1v1h-1zM14 8h1v1h-1zM14 9h1v1h-1zM14 10h1v1h-1zM14 11h1v1h-1zM14 12h1v1h-1zM14 13h1v1h-1zM1 14h14v1h-14z"/></svg>
<div class="t" style="left:95px;top:62px;transform:scaleX(0.815)">RMI Files</div>
<div class="a" style="left:63px;top:86px;width:10px;height:1px;background-image:linear-gradient(90deg,#808080 50%,transparent 50%);background-size:2px 1px;background-position:1px 0"></div>
<svg style="left:74px;top:77px" width="16" height="16" viewBox="0 0 16 16" shape-rendering="crispEdges"><path fill="#808080" d="M2 2h4v1h-4zM1 3h1v1h-1zM6 3h1v1h-1zM0 4h1v1h-1zM7 4h7v1h-7zM0 5h1v1h-1zM13 5h1v1h-1zM0 6h1v1h-1zM13 6h1v1h-1zM0 7h1v1h-1zM13 7h1v1h-1zM0 8h1v1h-1zM13 8h1v1h-1zM0 9h1v1h-1zM13 9h1v1h-1zM0 10h1v1h-1zM13 10h1v1h-1zM0 11h1v1h-1zM13 11h1v1h-1zM0 12h1v1h-1zM13 12h1v1h-1zM0 13h14v1h-14z"/><path fill="#fff" d="M2 3h1v1h-1zM4 3h1v1h-1zM1 4h1v1h-1zM3 4h1v1h-1zM5 4h1v1h-1zM1 5h12v1h-12zM1 6h1v1h-1zM3 6h1v1h-1zM5 6h1v1h-1zM7 6h1v1h-1zM9 6h1v1h-1zM11 6h1v1h-1zM1 7h2v1h-2zM4 7h1v1h-1zM6 7h1v1h-1zM8 7h1v1h-1zM10 7h1v1h-1zM12 7h1v1h-1zM1 8h1v1h-1zM3 8h1v1h-1zM5 8h1v1h-1zM7 8h1v1h-1zM9 8h1v1h-1zM11 8h1v1h-1zM1 9h2v1h-2zM4 9h1v1h-1zM6 9h1v1h-1zM8 9h1v1h-1zM10 9h1v1h-1zM12 9h1v1h-1zM1 10h1v1h-1zM3 10h1v1h-1zM5 10h1v1h-1zM7 10h1v1h-1zM9 10h1v1h-1zM11 10h1v1h-1zM1 11h2v1h-2zM4 11h1v1h-1zM6 11h1v1h-1zM8 11h1v1h-1zM10 11h1v1h-1zM12 11h1v1h-1zM1 12h1v1h-1zM3 12h1v1h-1zM5 12h1v1h-1zM7 12h1v1h-1zM9 12h1v1h-1zM11 12h1v1h-1z"/><path fill="#ff0" d="M3 3h1v1h-1zM5 3h1v1h-1zM2 4h1v1h-1zM4 4h1v1h-1zM6 4h1v1h-1zM2 6h1v1h-1zM4 6h1v1h-1zM6 6h1v1h-1zM8 6h1v1h-1zM10 6h1v1h-1zM12 6h1v1h-1zM3 7h1v1h-1zM5 7h1v1h-1zM7 7h1v1h-1zM9 7h1v1h-1zM11 7h1v1h-1zM2 8h1v1h-1zM4 8h1v1h-1zM6 8h1v1h-1zM8 8h1v1h-1zM10 8h1v1h-1zM12 8h1v1h-1zM3 9h1v1h-1zM5 9h1v1h-1zM7 9h1v1h-1zM9 9h1v1h-1zM11 9h1v1h-1zM2 10h1v1h-1zM4 10h1v1h-1zM6 10h1v1h-1zM8 10h1v1h-1zM10 10h1v1h-1zM12 10h1v1h-1zM3 11h1v1h-1zM5 11h1v1h-1zM7 11h1v1h-1zM9 11h1v1h-1zM11 11h1v1h-1zM2 12h1v1h-1zM4 12h1v1h-1zM6 12h1v1h-1zM8 12h1v1h-1zM10 12h1v1h-1zM12 12h1v1h-1z"/><path fill="#000" d="M14 5h1v1h-1zM14 6h1v1h-1zM14 7h1v1h-1zM14 8h1v1h-1zM14 9h1v1h-1zM14 10h1v1h-1zM14 11h1v1h-1zM14 12h1v1h-1zM14 13h1v1h-1zM1 14h14v1h-14z"/></svg>
<div class="t" style="left:95px;top:78px;transform:scaleX(0.818)">WAV Files</div>
<div class="a" style="left:27px;top:101px;width:8px;height:1px;background-image:linear-gradient(90deg,#808080 50%,transparent 50%);background-size:2px 1px;background-position:1px 0"></div>
<svg style="left:22px;top:97px" width="9" height="9" viewBox="0 0 9 9" shape-rendering="crispEdges"><path fill="#808080" d="M0 0h9v1h-9zM0 1h1v1h-1zM8 1h1v1h-1zM0 2h1v1h-1zM8 2h1v1h-1zM0 3h1v1h-1zM8 3h1v1h-1zM0 4h1v1h-1zM8 4h1v1h-1zM0 5h1v1h-1zM8 5h1v1h-1zM0 6h1v1h-1zM8 6h1v1h-1zM0 7h1v1h-1zM8 7h1v1h-1zM0 8h9v1h-9z"/><path fill="#fff" d="M1 1h7v1h-7zM1 2h7v1h-7zM1 3h7v1h-7zM1 4h1v1h-1zM7 4h1v1h-1zM1 5h7v1h-7zM1 6h7v1h-7zM1 7h7v1h-7z"/><path fill="#000" d="M2 4h5v1h-5z"/></svg>
<svg style="left:36px;top:93px" width="16" height="16" viewBox="0 0 16 16" shape-rendering="crispEdges"><path fill="#808080" d="M3 6h13v1h-13zM2 7h1v1h-1zM14 7h1v1h-1zM1 8h1v1h-1zM13 8h1v1h-1zM1 9h1v1h-1zM13 9h1v1h-1zM1 10h1v1h-1zM3 10h8v1h-8zM13 10h1v1h-1zM1 11h1v1h-1zM13 11h1v1h-1z"/><path fill="#fff" d="M3 7h11v1h-11zM2 8h11v1h-11z"/><path fill="#000" d="M15 7h1v1h-1zM15 8h1v1h-1zM15 9h1v1h-1zM15 10h1v1h-1zM14 11h1v1h-1zM1 12h13v1h-13z"/><path fill="#c0c0c0" d="M14 8h1v1h-1zM2 9h11v1h-11zM14 9h1v1h-1zM2 10h1v1h-1zM12 10h1v1h-1zM14 10h1v1h-1zM2 11h11v1h-11z"/><path fill="#008000" d="M11 10h1v1h-1z"/></svg>
<div class="t" style="left:61px;top:93px;transform:scaleX(0.720)">(C:)</div>
<div class="a" style="left:45px;top:117px;width:9px;height:1px;background-image:linear-gradient(90deg,#808080 50%,transparent 50%);background-size:2px 1px;background-position:1px 0"></div>
<svg style="left:41px;top:113px" width="9" height="9" viewBox="0 0 9 9" shape-rendering="crispEdges"><path fill="#808080" d="M0 0h9v1h-9zM0 1h1v1h-1zM8 1h1v1h-1zM0 2h1v1h-1zM8 2h1v1h-1zM0 3h1v1h-1zM8 3h1v1h-1zM0 4h1v1h-1zM8 4h1v1h-1zM0 5h1v1h-1zM8 5h1v1h-1zM0 6h1v1h-1zM8 6h1v1h-1zM0 7h1v1h-1zM8 7h1v1h-1zM0 8h9v1h-9z"/><path fill="#fff" d="M1 1h7v1h-7zM1 2h3v1h-3zM5 2h3v1h-3zM1 3h3v1h-3zM5 3h3v1h-3zM1 4h1v1h-1zM7 4h1v1h-1zM1 5h3v1h-3zM5 5h3v1h-3zM1 6h3v1h-3zM5 6h3v1h-3zM1 7h7v1h-7z"/><path fill="#000" d="M4 2h1v1h-1zM4 3h1v1h-1zM2 4h5v1h-5zM4 5h1v1h-1zM4 6h1v1h-1z"/></svg>
<svg style="left:55px;top:108px" width="16" height="16" viewBox="0 0 16 16" shape-rendering="crispEdges"><path fill="#808080" d="M2 2h4v1h-4zM1 3h1v1h-1zM6 3h1v1h-1zM0 4h1v1h-1zM7 4h7v1h-7zM0 5h1v1h-1zM13 5h1v1h-1zM0 6h1v1h-1zM13 6h1v1h-1zM0 7h1v1h-1zM13 7h1v1h-1zM0 8h1v1h-1zM13 8h1v1h-1zM0 9h1v1h-1zM13 9h1v1h-1zM0 10h1v1h-1zM13 10h1v1h-1zM0 11h1v1h-1zM13 11h1v1h-1zM0 12h1v1h-1zM13 12h1v1h-1zM0 13h14v1h-14z"/><path fill="#fff" d="M2 3h1v1h-1zM4 3h1v1h-1zM1 4h1v1h-1zM3 4h1v1h-1zM5 4h1v1h-1zM1 5h12v1h-12zM1 6h1v1h-1zM3 6h1v1h-1zM5 6h1v1h-1zM7 6h1v1h-1zM9 6h1v1h-1zM11 6h1v1h-1zM1 7h2v1h-2zM4 7h1v1h-1zM6 7h1v1h-1zM8 7h1v1h-1zM10 7h1v1h-1zM12 7h1v1h-1zM1 8h1v1h-1zM3 8h1v1h-1zM5 8h1v1h-1zM7 8h1v1h-1zM9 8h1v1h-1zM11 8h1v1h-1zM1 9h2v1h-2zM4 9h1v1h-1zM6 9h1v1h-1zM8 9h1v1h-1zM10 9h1v1h-1zM12 9h1v1h-1zM1 10h1v1h-1zM3 10h1v1h-1zM5 10h1v1h-1zM7 10h1v1h-1zM9 10h1v1h-1zM11 10h1v1h-1zM1 11h2v1h-2zM4 11h1v1h-1zM6 11h1v1h-1zM8 11h1v1h-1zM10 11h1v1h-1zM12 11h1v1h-1zM1 12h1v1h-1zM3 12h1v1h-1zM5 12h1v1h-1zM7 12h1v1h-1zM9 12h1v1h-1zM11 12h1v1h-1z"/><path fill="#ff0" d="M3 3h1v1h-1zM5 3h1v1h-1zM2 4h1v1h-1zM4 4h1v1h-1zM6 4h1v1h-1zM2 6h1v1h-1zM4 6h1v1h-1zM6 6h1v1h-1zM8 6h1v1h-1zM10 6h1v1h-1zM12 6h1v1h-1zM3 7h1v1h-1zM5 7h1v1h-1zM7 7h1v1h-1zM9 7h1v1h-1zM11 7h1v1h-1zM2 8h1v1h-1zM4 8h1v1h-1zM6 8h1v1h-1zM8 8h1v1h-1zM10 8h1v1h-1zM12 8h1v1h-1zM3 9h1v1h-1zM5 9h1v1h-1zM7 9h1v1h-1zM9 9h1v1h-1zM11 9h1v1h-1zM2 10h1v1h-1zM4 10h1v1h-1zM6 10h1v1h-1zM8 10h1v1h-1zM10 10h1v1h-1zM12 10h1v1h-1zM3 11h1v1h-1zM5 11h1v1h-1zM7 11h1v1h-1zM9 11h1v1h-1zM11 11h1v1h-1zM2 12h1v1h-1zM4 12h1v1h-1zM6 12h1v1h-1zM8 12h1v1h-1zM10 12h1v1h-1zM12 12h1v1h-1z"/><path fill="#000" d="M14 5h1v1h-1zM14 6h1v1h-1zM14 7h1v1h-1zM14 8h1v1h-1zM14 9h1v1h-1zM14 10h1v1h-1zM14 11h1v1h-1zM14 12h1v1h-1zM14 13h1v1h-1zM1 14h14v1h-14z"/></svg>
<div class="t" style="left:77px;top:109px;transform:scaleX(0.797)">Program Files</div>
<div class="a" style="left:45px;top:133px;width:9px;height:1px;background-image:linear-gradient(90deg,#808080 50%,transparent 50%);background-size:2px 1px;background-position:1px 0"></div>
<svg style="left:55px;top:124px" width="16" height="16" viewBox="0 0 16 16" shape-rendering="crispEdges"><path fill="#808080" d="M2 2h4v1h-4zM1 3h1v1h-1zM6 3h1v1h-1zM0 4h1v1h-1zM7 4h7v1h-7zM0 5h1v1h-1zM13 5h1v1h-1zM0 6h1v1h-1zM13 6h1v1h-1zM0 7h1v1h-1zM13 7h1v1h-1zM0 8h1v1h-1zM13 8h1v1h-1zM0 9h1v1h-1zM13 9h1v1h-1zM0 10h1v1h-1zM13 10h1v1h-1zM0 11h1v1h-1zM13 11h1v1h-1zM0 12h1v1h-1zM13 12h1v1h-1zM0 13h14v1h-14z"/><path fill="#fff" d="M2 3h1v1h-1zM4 3h1v1h-1zM1 4h1v1h-1zM3 4h1v1h-1zM5 4h1v1h-1zM1 5h12v1h-12zM1 6h1v1h-1zM3 6h1v1h-1zM5 6h1v1h-1zM7 6h1v1h-1zM9 6h1v1h-1zM11 6h1v1h-1zM1 7h2v1h-2zM4 7h1v1h-1zM6 7h1v1h-1zM8 7h1v1h-1zM10 7h1v1h-1zM12 7h1v1h-1zM1 8h1v1h-1zM3 8h1v1h-1zM5 8h1v1h-1zM7 8h1v1h-1zM9 8h1v1h-1zM11 8h1v1h-1zM1 9h2v1h-2zM4 9h1v1h-1zM6 9h1v1h-1zM8 9h1v1h-1zM10 9h1v1h-1zM12 9h1v1h-1zM1 10h1v1h-1zM3 10h1v1h-1zM5 10h1v1h-1zM7 10h1v1h-1zM9 10h1v1h-1zM11 10h1v1h-1zM1 11h2v1h-2zM4 11h1v1h-1zM6 11h1v1h-1zM8 11h1v1h-1zM10 11h1v1h-1zM12 11h1v1h-1zM1 12h1v1h-1zM3 12h1v1h-1zM5 12h1v1h-1zM7 12h1v1h-1zM9 12h1v1h-1zM11 12h1v1h-1z"/><path fill="#ff0" d="M3 3h1v1h-1zM5 3h1v1h-1zM2 4h1v1h-1zM4 4h1v1h-1zM6 4h1v1h-1zM2 6h1v1h-1zM4 6h1v1h-1zM6 6h1v1h-1zM8 6h1v1h-1zM10 6h1v1h-1zM12 6h1v1h-1zM3 7h1v1h-1zM5 7h1v1h-1zM7 7h1v1h-1zM9 7h1v1h-1zM11 7h1v1h-1zM2 8h1v1h-1zM4 8h1v1h-1zM6 8h1v1h-1zM8 8h1v1h-1zM10 8h1v1h-1zM12 8h1v1h-1zM3 9h1v1h-1zM5 9h1v1h-1zM7 9h1v1h-1zM9 9h1v1h-1zM11 9h1v1h-1zM2 10h1v1h-1zM4 10h1v1h-1zM6 10h1v1h-1zM8 10h1v1h-1zM10 10h1v1h-1zM12 10h1v1h-1zM3 11h1v1h-1zM5 11h1v1h-1zM7 11h1v1h-1zM9 11h1v1h-1zM11 11h1v1h-1zM2 12h1v1h-1zM4 12h1v1h-1zM6 12h1v1h-1zM8 12h1v1h-1zM10 12h1v1h-1zM12 12h1v1h-1z"/><path fill="#000" d="M14 5h1v1h-1zM14 6h1v1h-1zM14 7h1v1h-1zM14 8h1v1h-1zM14 9h1v1h-1zM14 10h1v1h-1zM14 11h1v1h-1zM14 12h1v1h-1zM14 13h1v1h-1zM1 14h14v1h-14z"/></svg>
<div class="t" style="left:77px;top:125px;transform:scaleX(0.814)">Temp</div>
<div class="a" style="left:45px;top:148px;width:9px;height:1px;background-image:linear-gradient(90deg,#808080 50%,transparent 50%);background-size:2px 1px;background-position:1px 0"></div>
<svg style="left:41px;top:144px" width="9" height="9" viewBox="0 0 9 9" shape-rendering="crispEdges"><path fill="#808080" d="M0 0h9v1h-9zM0 1h1v1h-1zM8 1h1v1h-1zM0 2h1v1h-1zM8 2h1v1h-1zM0 3h1v1h-1zM8 3h1v1h-1zM0 4h1v1h-1zM8 4h1v1h-1zM0 5h1v1h-1zM8 5h1v1h-1zM0 6h1v1h-1zM8 6h1v1h-1zM0 7h1v1h-1zM8 7h1v1h-1zM0 8h9v1h-9z"/><path fill="#fff" d="M1 1h7v1h-7zM1 2h7v1h-7zM1 3h7v1h-7zM1 4h1v1h-1zM7 4h1v1h-1zM1 5h7v1h-7zM1 6h7v1h-7zM1 7h7v1h-7z"/><path fill="#000" d="M2 4h5v1h-5z"/></svg>
<svg style="left:55px;top:140px" width="16" height="16" viewBox="0 0 16 16" shape-rendering="crispEdges"><path fill="#808080" d="M2 2h4v1h-4zM1 3h1v1h-1zM6 3h1v1h-1zM0 4h1v1h-1zM7 4h7v1h-7zM0 5h1v1h-1zM13 5h1v1h-1zM0 6h1v1h-1zM13 6h1v1h-1zM0 7h1v1h-1zM13 7h1v1h-1zM0 8h1v1h-1zM13 8h1v1h-1zM0 9h1v1h-1zM13 9h1v1h-1zM0 10h1v1h-1zM13 10h1v1h-1zM0 11h1v1h-1zM13 11h1v1h-1zM0 12h1v1h-1zM13 12h1v1h-1zM0 13h14v1h-14z"/><path fill="#fff" d="M2 3h1v1h-1zM4 3h1v1h-1zM1 4h1v1h-1zM3 4h1v1h-1zM5 4h1v1h-1zM1 5h12v1h-12zM1 6h1v1h-1zM3 6h1v1h-1zM5 6h1v1h-1zM7 6h1v1h-1zM9 6h1v1h-1zM11 6h1v1h-1zM1 7h2v1h-2zM4 7h1v1h-1zM6 7h1v1h-1zM8 7h1v1h-1zM10 7h1v1h-1zM12 7h1v1h-1zM1 8h1v1h-1zM3 8h1v1h-1zM5 8h1v1h-1zM7 8h1v1h-1zM9 8h1v1h-1zM11 8h1v1h-1zM1 9h2v1h-2zM4 9h1v1h-1zM6 9h1v1h-1zM8 9h1v1h-1zM10 9h1v1h-1zM12 9h1v1h-1zM1 10h1v1h-1zM3 10h1v1h-1zM5 10h1v1h-1zM7 10h1v1h-1zM9 10h1v1h-1zM11 10h1v1h-1zM1 11h2v1h-2zM4 11h1v1h-1zM6 11h1v1h-1zM8 11h1v1h-1zM10 11h1v1h-1zM12 11h1v1h-1zM1 12h1v1h-1zM3 12h1v1h-1zM5 12h1v1h-1zM7 12h1v1h-1zM9 12h1v1h-1zM11 12h1v1h-1z"/><path fill="#ff0" d="M3 3h1v1h-1zM5 3h1v1h-1zM2 4h1v1h-1zM4 4h1v1h-1zM6 4h1v1h-1zM2 6h1v1h-1zM4 6h1v1h-1zM6 6h1v1h-1zM8 6h1v1h-1zM10 6h1v1h-1zM12 6h1v1h-1zM3 7h1v1h-1zM5 7h1v1h-1zM7 7h1v1h-1zM9 7h1v1h-1zM11 7h1v1h-1zM2 8h1v1h-1zM4 8h1v1h-1zM6 8h1v1h-1zM8 8h1v1h-1zM10 8h1v1h-1zM12 8h1v1h-1zM3 9h1v1h-1zM5 9h1v1h-1zM7 9h1v1h-1zM9 9h1v1h-1zM11 9h1v1h-1zM2 10h1v1h-1zM4 10h1v1h-1zM6 10h1v1h-1zM8 10h1v1h-1zM10 10h1v1h-1zM12 10h1v1h-1zM3 11h1v1h-1zM5 11h1v1h-1zM7 11h1v1h-1zM9 11h1v1h-1zM11 11h1v1h-1zM2 12h1v1h-1zM4 12h1v1h-1zM6 12h1v1h-1zM8 12h1v1h-1zM10 12h1v1h-1zM12 12h1v1h-1z"/><path fill="#000" d="M14 5h1v1h-1zM14 6h1v1h-1zM14 7h1v1h-1zM14 8h1v1h-1zM14 9h1v1h-1zM14 10h1v1h-1zM14 11h1v1h-1zM14 12h1v1h-1zM14 13h1v1h-1zM1 14h14v1h-14z"/></svg>
<div class="t" style="left:77px;top:140px;transform:scaleX(0.826)">Winnt</div>
<div class="a" style="left:63px;top:164px;width:10px;height:1px;background-image:linear-gradient(90deg,#808080 50%,transparent 50%);background-size:2px 1px;background-position:1px 0"></div>
<svg style="left:74px;top:155px" width="16" height="16" viewBox="0 0 16 16" shape-rendering="crispEdges"><path fill="#808080" d="M2 2h4v1h-4zM1 3h1v1h-1zM6 3h1v1h-1zM0 4h1v1h-1zM7 4h7v1h-7zM0 5h1v1h-1zM13 5h1v1h-1zM0 6h1v1h-1zM13 6h1v1h-1zM0 7h1v1h-1zM13 7h1v1h-1zM0 8h1v1h-1zM13 8h1v1h-1zM0 9h1v1h-1zM13 9h1v1h-1zM0 10h1v1h-1zM13 10h1v1h-1zM0 11h1v1h-1zM13 11h1v1h-1zM0 12h1v1h-1zM13 12h1v1h-1zM0 13h14v1h-14z"/><path fill="#fff" d="M2 3h1v1h-1zM4 3h1v1h-1zM1 4h1v1h-1zM3 4h1v1h-1zM5 4h1v1h-1zM1 5h12v1h-12zM1 6h1v1h-1zM3 6h1v1h-1zM5 6h1v1h-1zM7 6h1v1h-1zM9 6h1v1h-1zM11 6h1v1h-1zM1 7h2v1h-2zM4 7h1v1h-1zM6 7h1v1h-1zM8 7h1v1h-1zM10 7h1v1h-1zM12 7h1v1h-1zM1 8h1v1h-1zM3 8h1v1h-1zM5 8h1v1h-1zM7 8h1v1h-1zM9 8h1v1h-1zM11 8h1v1h-1zM1 9h2v1h-2zM4 9h1v1h-1zM6 9h1v1h-1zM8 9h1v1h-1zM10 9h1v1h-1zM12 9h1v1h-1zM1 10h1v1h-1zM3 10h1v1h-1zM5 10h1v1h-1zM7 10h1v1h-1zM9 10h1v1h-1zM11 10h1v1h-1zM1 11h2v1h-2zM4 11h1v1h-1zM6 11h1v1h-1zM8 11h1v1h-1zM10 11h1v1h-1zM12 11h1v1h-1zM1 12h1v1h-1zM3 12h1v1h-1zM5 12h1v1h-1zM7 12h1v1h-1zM9 12h1v1h-1zM11 12h1v1h-1z"/><path fill="#ff0" d="M3 3h1v1h-1zM5 3h1v1h-1zM2 4h1v1h-1zM4 4h1v1h-1zM6 4h1v1h-1zM2 6h1v1h-1zM4 6h1v1h-1zM6 6h1v1h-1zM8 6h1v1h-1zM10 6h1v1h-1zM12 6h1v1h-1zM3 7h1v1h-1zM5 7h1v1h-1zM7 7h1v1h-1zM9 7h1v1h-1zM11 7h1v1h-1zM2 8h1v1h-1zM4 8h1v1h-1zM6 8h1v1h-1zM8 8h1v1h-1zM10 8h1v1h-1zM12 8h1v1h-1zM3 9h1v1h-1zM5 9h1v1h-1zM7 9h1v1h-1zM9 9h1v1h-1zM11 9h1v1h-1zM2 10h1v1h-1zM4 10h1v1h-1zM6 10h1v1h-1zM8 10h1v1h-1zM10 10h1v1h-1zM12 10h1v1h-1zM3 11h1v1h-1zM5 11h1v1h-1zM7 11h1v1h-1zM9 11h1v1h-1zM11 11h1v1h-1zM2 12h1v1h-1zM4 12h1v1h-1zM6 12h1v1h-1zM8 12h1v1h-1zM10 12h1v1h-1zM12 12h1v1h-1z"/><path fill="#000" d="M14 5h1v1h-1zM14 6h1v1h-1zM14 7h1v1h-1zM14 8h1v1h-1zM14 9h1v1h-1zM14 10h1v1h-1zM14 11h1v1h-1zM14 12h1v1h-1zM14 13h1v1h-1zM1 14h14v1h-14z"/></svg>
<div class="t" style="left:95px;top:156px;transform:scaleX(0.802)">Config</div>
<div class="a" style="left:63px;top:179px;width:10px;height:1px;background-image:linear-gradient(90deg,#808080 50%,transparent 50%);background-size:2px 1px;background-position:1px 0"></div>
<svg style="left:74px;top:171px" width="16" height="16" viewBox="0 0 16 16" shape-rendering="crispEdges"><path fill="#808080" d="M2 2h4v1h-4zM1 3h1v1h-1zM6 3h1v1h-1zM0 4h1v1h-1zM7 4h7v1h-7zM0 5h1v1h-1zM13 5h1v1h-1zM0 6h1v1h-1zM13 6h1v1h-1zM0 7h1v1h-1zM13 7h1v1h-1zM0 8h1v1h-1zM13 8h1v1h-1zM0 9h1v1h-1zM13 9h1v1h-1zM0 10h1v1h-1zM13 10h1v1h-1zM0 11h1v1h-1zM13 11h1v1h-1zM0 12h1v1h-1zM13 12h1v1h-1zM0 13h14v1h-14z"/><path fill="#fff" d="M2 3h1v1h-1zM4 3h1v1h-1zM1 4h1v1h-1zM3 4h1v1h-1zM5 4h1v1h-1zM1 5h12v1h-12zM1 6h1v1h-1zM3 6h1v1h-1zM5 6h1v1h-1zM7 6h1v1h-1zM9 6h1v1h-1zM11 6h1v1h-1zM1 7h2v1h-2zM4 7h1v1h-1zM6 7h1v1h-1zM8 7h1v1h-1zM10 7h1v1h-1zM12 7h1v1h-1zM1 8h1v1h-1zM3 8h1v1h-1zM5 8h1v1h-1zM7 8h1v1h-1zM9 8h1v1h-1zM11 8h1v1h-1zM1 9h2v1h-2zM4 9h1v1h-1zM6 9h1v1h-1zM8 9h1v1h-1zM10 9h1v1h-1zM12 9h1v1h-1zM1 10h1v1h-1zM3 10h1v1h-1zM5 10h1v1h-1zM7 10h1v1h-1zM9 10h1v1h-1zM11 10h1v1h-1zM1 11h2v1h-2zM4 11h1v1h-1zM6 11h1v1h-1zM8 11h1v1h-1zM10 11h1v1h-1zM12 11h1v1h-1zM1 12h1v1h-1zM3 12h1v1h-1zM5 12h1v1h-1zM7 12h1v1h-1zM9 12h1v1h-1zM11 12h1v1h-1z"/><path fill="#ff0" d="M3 3h1v1h-1zM5 3h1v1h-1zM2 4h1v1h-1zM4 4h1v1h-1zM6 4h1v1h-1zM2 6h1v1h-1zM4 6h1v1h-1zM6 6h1v1h-1zM8 6h1v1h-1zM10 6h1v1h-1zM12 6h1v1h-1zM3 7h1v1h-1zM5 7h1v1h-1zM7 7h1v1h-1zM9 7h1v1h-1zM11 7h1v1h-1zM2 8h1v1h-1zM4 8h1v1h-1zM6 8h1v1h-1zM8 8h1v1h-1zM10 8h1v1h-1zM12 8h1v1h-1zM3 9h1v1h-1zM5 9h1v1h-1zM7 9h1v1h-1zM9 9h1v1h-1zM11 9h1v1h-1zM2 10h1v1h-1zM4 10h1v1h-1zM6 10h1v1h-1zM8 10h1v1h-1zM10 10h1v1h-1zM12 10h1v1h-1zM3 11h1v1h-1zM5 11h1v1h-1zM7 11h1v1h-1zM9 11h1v1h-1zM11 11h1v1h-1zM2 12h1v1h-1zM4 12h1v1h-1zM6 12h1v1h-1zM8 12h1v1h-1zM10 12h1v1h-1zM12 12h1v1h-1z"/><path fill="#000" d="M14 5h1v1h-1zM14 6h1v1h-1zM14 7h1v1h-1zM14 8h1v1h-1zM14 9h1v1h-1zM14 10h1v1h-1zM14 11h1v1h-1zM14 12h1v1h-1zM14 13h1v1h-1zM1 14h14v1h-14z"/></svg>
<div class="t" style="left:95px;top:171px;transform:scaleX(0.747)">Cursors</div>
<div class="a" style="left:63px;top:195px;width:10px;height:1px;background-image:linear-gradient(90deg,#808080 50%,transparent 50%);background-size:2px 1px;background-position:1px 0"></div>
<svg style="left:74px;top:186px" width="16" height="16" viewBox="0 0 16 16" shape-rendering="crispEdges"><path fill="#808080" d="M2 2h4v1h-4zM1 3h1v1h-1zM6 3h1v1h-1zM0 4h1v1h-1zM7 4h7v1h-7zM0 5h1v1h-1zM13 5h1v1h-1zM0 6h1v1h-1zM13 6h1v1h-1zM0 7h1v1h-1zM13 7h1v1h-1zM0 8h1v1h-1zM13 8h1v1h-1zM0 9h1v1h-1zM13 9h1v1h-1zM0 10h1v1h-1zM13 10h1v1h-1zM0 11h1v1h-1zM13 11h1v1h-1zM0 12h1v1h-1zM13 12h1v1h-1zM0 13h14v1h-14z"/><path fill="#fff" d="M2 3h1v1h-1zM4 3h1v1h-1zM1 4h1v1h-1zM3 4h1v1h-1zM5 4h1v1h-1zM1 5h12v1h-12zM1 6h1v1h-1zM3 6h1v1h-1zM5 6h1v1h-1zM7 6h1v1h-1zM9 6h1v1h-1zM11 6h1v1h-1zM1 7h2v1h-2zM4 7h1v1h-1zM6 7h1v1h-1zM8 7h1v1h-1zM10 7h1v1h-1zM12 7h1v1h-1zM1 8h1v1h-1zM3 8h1v1h-1zM5 8h1v1h-1zM7 8h1v1h-1zM9 8h1v1h-1zM11 8h1v1h-1zM1 9h2v1h-2zM4 9h1v1h-1zM6 9h1v1h-1zM8 9h1v1h-1zM10 9h1v1h-1zM12 9h1v1h-1zM1 10h1v1h-1zM3 10h1v1h-1zM5 10h1v1h-1zM7 10h1v1h-1zM9 10h1v1h-1zM11 10h1v1h-1zM1 11h2v1h-2zM4 11h1v1h-1zM6 11h1v1h-1zM8 11h1v1h-1zM10 11h1v1h-1zM12 11h1v1h-1zM1 12h1v1h-1zM3 12h1v1h-1zM5 12h1v1h-1zM7 12h1v1h-1zM9 12h1v1h-1zM11 12h1v1h-1z"/><path fill="#ff0" d="M3 3h1v1h-1zM5 3h1v1h-1zM2 4h1v1h-1zM4 4h1v1h-1zM6 4h1v1h-1zM2 6h1v1h-1zM4 6h1v1h-1zM6 6h1v1h-1zM8 6h1v1h-1zM10 6h1v1h-1zM12 6h1v1h-1zM3 7h1v1h-1zM5 7h1v1h-1zM7 7h1v1h-1zM9 7h1v1h-1zM11 7h1v1h-1zM2 8h1v1h-1zM4 8h1v1h-1zM6 8h1v1h-1zM8 8h1v1h-1zM10 8h1v1h-1zM12 8h1v1h-1zM3 9h1v1h-1zM5 9h1v1h-1zM7 9h1v1h-1zM9 9h1v1h-1zM11 9h1v1h-1zM2 10h1v1h-1zM4 10h1v1h-1zM6 10h1v1h-1zM8 10h1v1h-1zM10 10h1v1h-1zM12 10h1v1h-1zM3 11h1v1h-1zM5 11h1v1h-1zM7 11h1v1h-1zM9 11h1v1h-1zM11 11h1v1h-1zM2 12h1v1h-1zM4 12h1v1h-1zM6 12h1v1h-1zM8 12h1v1h-1zM10 12h1v1h-1zM12 12h1v1h-1z"/><path fill="#000" d="M14 5h1v1h-1zM14 6h1v1h-1zM14 7h1v1h-1zM14 8h1v1h-1zM14 9h1v1h-1zM14 10h1v1h-1zM14 11h1v1h-1zM14 12h1v1h-1zM14 13h1v1h-1zM1 14h14v1h-14z"/></svg>
<div class="t" style="left:95px;top:187px;transform:scaleX(0.796)">Fonts</div>
<div class="a" style="left:63px;top:210px;width:10px;height:1px;background-image:linear-gradient(90deg,#808080 50%,transparent 50%);background-size:2px 1px;background-position:1px 0"></div>
<svg style="left:59px;top:206px" width="9" height="9" viewBox="0 0 9 9" shape-rendering="crispEdges"><path fill="#808080" d="M0 0h9v1h-9zM0 1h1v1h-1zM8 1h1v1h-1zM0 2h1v1h-1zM8 2h1v1h-1zM0 3h1v1h-1zM8 3h1v1h-1zM0 4h1v1h-1zM8 4h1v1h-1zM0 5h1v1h-1zM8 5h1v1h-1zM0 6h1v1h-1zM8 6h1v1h-1zM0 7h1v1h-1zM8 7h1v1h-1zM0 8h9v1h-9z"/><path fill="#fff" d="M1 1h7v1h-7zM1 2h3v1h-3zM5 2h3v1h-3zM1 3h3v1h-3zM5 3h3v1h-3zM1 4h1v1h-1zM7 4h1v1h-1zM1 5h3v1h-3zM5 5h3v1h-3zM1 6h3v1h-3zM5 6h3v1h-3zM1 7h7v1h-7z"/><path fill="#000" d="M4 2h1v1h-1zM4 3h1v1h-1zM2 4h5v1h-5zM4 5h1v1h-1zM4 6h1v1h-1z"/></svg>
<svg style="left:74px;top:202px" width="16" height="16" viewBox="0 0 16 16" shape-rendering="crispEdges"><path fill="#808080" d="M2 2h4v1h-4zM1 3h1v1h-1zM6 3h1v1h-1zM0 4h1v1h-1zM7 4h7v1h-7zM0 5h1v1h-1zM13 5h1v1h-1zM0 6h1v1h-1zM13 6h1v1h-1zM0 7h1v1h-1zM13 7h1v1h-1zM0 8h1v1h-1zM13 8h1v1h-1zM0 9h1v1h-1zM13 9h1v1h-1zM0 10h1v1h-1zM13 10h1v1h-1zM0 11h1v1h-1zM13 11h1v1h-1zM0 12h1v1h-1zM13 12h1v1h-1zM0 13h14v1h-14z"/><path fill="#fff" d="M2 3h1v1h-1zM4 3h1v1h-1zM1 4h1v1h-1zM3 4h1v1h-1zM5 4h1v1h-1zM1 5h12v1h-12zM1 6h1v1h-1zM3 6h1v1h-1zM5 6h1v1h-1zM7 6h1v1h-1zM9 6h1v1h-1zM11 6h1v1h-1zM1 7h2v1h-2zM4 7h1v1h-1zM6 7h1v1h-1zM8 7h1v1h-1zM10 7h1v1h-1zM12 7h1v1h-1zM1 8h1v1h-1zM3 8h1v1h-1zM5 8h1v1h-1zM7 8h1v1h-1zM9 8h1v1h-1zM11 8h1v1h-1zM1 9h2v1h-2zM4 9h1v1h-1zM6 9h1v1h-1zM8 9h1v1h-1zM10 9h1v1h-1zM12 9h1v1h-1zM1 10h1v1h-1zM3 10h1v1h-1zM5 10h1v1h-1zM7 10h1v1h-1zM9 10h1v1h-1zM11 10h1v1h-1zM1 11h2v1h-2zM4 11h1v1h-1zM6 11h1v1h-1zM8 11h1v1h-1zM10 11h1v1h-1zM12 11h1v1h-1zM1 12h1v1h-1zM3 12h1v1h-1zM5 12h1v1h-1zM7 12h1v1h-1zM9 12h1v1h-1zM11 12h1v1h-1z"/><path fill="#ff0" d="M3 3h1v1h-1zM5 3h1v1h-1zM2 4h1v1h-1zM4 4h1v1h-1zM6 4h1v1h-1zM2 6h1v1h-1zM4 6h1v1h-1zM6 6h1v1h-1zM8 6h1v1h-1zM10 6h1v1h-1zM12 6h1v1h-1zM3 7h1v1h-1zM5 7h1v1h-1zM7 7h1v1h-1zM9 7h1v1h-1zM11 7h1v1h-1zM2 8h1v1h-1zM4 8h1v1h-1zM6 8h1v1h-1zM8 8h1v1h-1zM10 8h1v1h-1zM12 8h1v1h-1zM3 9h1v1h-1zM5 9h1v1h-1zM7 9h1v1h-1zM9 9h1v1h-1zM11 9h1v1h-1zM2 10h1v1h-1zM4 10h1v1h-1zM6 10h1v1h-1zM8 10h1v1h-1zM10 10h1v1h-1zM12 10h1v1h-1zM3 11h1v1h-1zM5 11h1v1h-1zM7 11h1v1h-1zM9 11h1v1h-1zM11 11h1v1h-1zM2 12h1v1h-1zM4 12h1v1h-1zM6 12h1v1h-1zM8 12h1v1h-1zM10 12h1v1h-1zM12 12h1v1h-1z"/><path fill="#000" d="M14 5h1v1h-1zM14 6h1v1h-1zM14 7h1v1h-1zM14 8h1v1h-1zM14 9h1v1h-1zM14 10h1v1h-1zM14 11h1v1h-1zM14 12h1v1h-1zM14 13h1v1h-1zM1 14h14v1h-14z"/></svg>
<div class="t" style="left:95px;top:202px;transform:scaleX(0.771)">forms</div>
<div class="a" style="left:63px;top:226px;width:10px;height:1px;background-image:linear-gradient(90deg,#808080 50%,transparent 50%);background-size:2px 1px;background-position:1px 0"></div>
<svg style="left:74px;top:217px" width="16" height="16" viewBox="0 0 16 16" shape-rendering="crispEdges"><path fill="#808080" d="M2 2h4v1h-4zM1 3h1v1h-1zM6 3h1v1h-1zM0 4h1v1h-1zM7 4h7v1h-7zM0 5h1v1h-1zM13 5h1v1h-1zM0 6h1v1h-1zM13 6h1v1h-1zM0 7h1v1h-1zM13 7h1v1h-1zM0 8h1v1h-1zM13 8h1v1h-1zM0 9h1v1h-1zM13 9h1v1h-1zM0 10h1v1h-1zM13 10h1v1h-1zM0 11h1v1h-1zM13 11h1v1h-1zM0 12h1v1h-1zM13 12h1v1h-1zM0 13h14v1h-14z"/><path fill="#fff" d="M2 3h1v1h-1zM4 3h1v1h-1zM1 4h1v1h-1zM3 4h1v1h-1zM5 4h1v1h-1zM1 5h12v1h-12zM1 6h1v1h-1zM3 6h1v1h-1zM5 6h1v1h-1zM7 6h1v1h-1zM9 6h1v1h-1zM11 6h1v1h-1zM1 7h2v1h-2zM4 7h1v1h-1zM6 7h1v1h-1zM8 7h1v1h-1zM10 7h1v1h-1zM12 7h1v1h-1zM1 8h1v1h-1zM3 8h1v1h-1zM5 8h1v1h-1zM7 8h1v1h-1zM9 8h1v1h-1zM11 8h1v1h-1zM1 9h2v1h-2zM4 9h1v1h-1zM6 9h1v1h-1zM8 9h1v1h-1zM10 9h1v1h-1zM12 9h1v1h-1zM1 10h1v1h-1zM3 10h1v1h-1zM5 10h1v1h-1zM7 10h1v1h-1zM9 10h1v1h-1zM11 10h1v1h-1zM1 11h2v1h-2zM4 11h1v1h-1zM6 11h1v1h-1zM8 11h1v1h-1zM10 11h1v1h-1zM12 11h1v1h-1zM1 12h1v1h-1zM3 12h1v1h-1zM5 12h1v1h-1zM7 12h1v1h-1zM9 12h1v1h-1zM11 12h1v1h-1z"/><path fill="#ff0" d="M3 3h1v1h-1zM5 3h1v1h-1zM2 4h1v1h-1zM4 4h1v1h-1zM6 4h1v1h-1zM2 6h1v1h-1zM4 6h1v1h-1zM6 6h1v1h-1zM8 6h1v1h-1zM10 6h1v1h-1zM12 6h1v1h-1zM3 7h1v1h-1zM5 7h1v1h-1zM7 7h1v1h-1zM9 7h1v1h-1zM11 7h1v1h-1zM2 8h1v1h-1zM4 8h1v1h-1zM6 8h1v1h-1zM8 8h1v1h-1zM10 8h1v1h-1zM12 8h1v1h-1zM3 9h1v1h-1zM5 9h1v1h-1zM7 9h1v1h-1zM9 9h1v1h-1zM11 9h1v1h-1zM2 10h1v1h-1zM4 10h1v1h-1zM6 10h1v1h-1zM8 10h1v1h-1zM10 10h1v1h-1zM12 10h1v1h-1zM3 11h1v1h-1zM5 11h1v1h-1zM7 11h1v1h-1zM9 11h1v1h-1zM11 11h1v1h-1zM2 12h1v1h-1zM4 12h1v1h-1zM6 12h1v1h-1zM8 12h1v1h-1zM10 12h1v1h-1zM12 12h1v1h-1z"/><path fill="#000" d="M14 5h1v1h-1zM14 6h1v1h-1zM14 7h1v1h-1zM14 8h1v1h-1zM14 9h1v1h-1zM14 10h1v1h-1zM14 11h1v1h-1zM14 12h1v1h-1zM14 13h1v1h-1zM1 14h14v1h-14z"/></svg>
<div class="t" style="left:95px;top:218px;transform:scaleX(0.801)">Help</div>
<div class="a" style="left:63px;top:241px;width:10px;height:1px;background-image:linear-gradient(90deg,#808080 50%,transparent 50%);background-size:2px 1px;background-position:1px 0"></div>
<svg style="left:59px;top:237px" width="9" height="9" viewBox="0 0 9 9" shape-rendering="crispEdges"><path fill="#808080" d="M0 0h9v1h-9zM0 1h1v1h-1zM8 1h1v1h-1zM0 2h1v1h-1zM8 2h1v1h-1zM0 3h1v1h-1zM8 3h1v1h-1zM0 4h1v1h-1zM8 4h1v1h-1zM0 5h1v1h-1zM8 5h1v1h-1zM0 6h1v1h-1zM8 6h1v1h-1zM0 7h1v1h-1zM8 7h1v1h-1zM0 8h9v1h-9z"/><path fill="#fff" d="M1 1h7v1h-7zM1 2h3v1h-3zM5 2h3v1h-3zM1 3h3v1h-3zM5 3h3v1h-3zM1 4h1v1h-1zM7 4h1v1h-1zM1 5h3v1h-3zM5 5h3v1h-3zM1 6h3v1h-3zM5 6h3v1h-3zM1 7h7v1h-7z"/><path fill="#000" d="M4 2h1v1h-1zM4 3h1v1h-1zM2 4h5v1h-5zM4 5h1v1h-1zM4 6h1v1h-1z"/></svg>
<svg style="left:74px;top:233px" width="16" height="16" viewBox="0 0 16 16" shape-rendering="crispEdges"><path fill="#808080" d="M2 2h4v1h-4zM1 3h1v1h-1zM6 3h1v1h-1zM0 4h1v1h-1zM7 4h6v1h-6zM0 5h1v1h-1zM12 5h1v1h-1zM0 6h1v1h-1zM3 6h13v1h-13zM0 7h1v1h-1zM2 7h1v1h-1zM14 7h1v1h-1zM0 8h1v1h-1zM2 8h1v1h-1zM14 8h1v1h-1zM0 9h2v1h-2zM13 9h1v1h-1zM0 10h2v1h-2zM13 10h1v1h-1zM0 11h1v1h-1zM12 11h1v1h-1zM0 12h13v1h-13z"/><path fill="#fff" d="M2 3h1v1h-1zM4 3h1v1h-1zM1 4h1v1h-1zM3 4h1v1h-1zM5 4h1v1h-1zM1 5h1v1h-1zM3 5h1v1h-1zM5 5h1v1h-1zM7 5h1v1h-1zM9 5h1v1h-1zM11 5h1v1h-1zM1 6h1v1h-1zM1 7h1v1h-1zM3 7h1v1h-1zM5 7h1v1h-1zM7 7h1v1h-1zM9 7h1v1h-1zM11 7h1v1h-1zM13 7h1v1h-1zM1 8h1v1h-1zM4 8h1v1h-1zM6 8h1v1h-1zM8 8h1v1h-1zM10 8h1v1h-1zM12 8h1v1h-1zM2 9h1v1h-1zM4 9h1v1h-1zM6 9h1v1h-1zM8 9h1v1h-1zM10 9h1v1h-1zM12 9h1v1h-1zM3 10h1v1h-1zM5 10h1v1h-1zM7 10h1v1h-1zM9 10h1v1h-1zM11 10h1v1h-1zM1 11h1v1h-1zM3 11h1v1h-1zM5 11h1v1h-1zM7 11h1v1h-1zM9 11h1v1h-1zM11 11h1v1h-1z"/><path fill="#ff0" d="M3 3h1v1h-1zM5 3h1v1h-1zM2 4h1v1h-1zM4 4h1v1h-1zM6 4h1v1h-1zM2 5h1v1h-1zM4 5h1v1h-1zM6 5h1v1h-1zM8 5h1v1h-1zM10 5h1v1h-1zM2 6h1v1h-1zM4 7h1v1h-1zM6 7h1v1h-1zM8 7h1v1h-1zM10 7h1v1h-1zM12 7h1v1h-1zM3 8h1v1h-1zM5 8h1v1h-1zM7 8h1v1h-1zM9 8h1v1h-1zM11 8h1v1h-1zM13 8h1v1h-1zM3 9h1v1h-1zM5 9h1v1h-1zM7 9h1v1h-1zM9 9h1v1h-1zM11 9h1v1h-1zM2 10h1v1h-1zM4 10h1v1h-1zM6 10h1v1h-1zM8 10h1v1h-1zM10 10h1v1h-1zM12 10h1v1h-1zM2 11h1v1h-1zM4 11h1v1h-1zM6 11h1v1h-1zM8 11h1v1h-1zM10 11h1v1h-1z"/><path fill="#000" d="M13 5h1v1h-1zM15 7h1v1h-1zM15 8h1v1h-1zM14 9h2v1h-2zM14 10h1v1h-1zM13 11h2v1h-2zM13 12h1v1h-1zM1 13h12v1h-12z"/></svg>
<div class="a" style="left:92px;top:234px;width:33px;height:15px;background:#000080;outline:1px dotted #ffff80;outline-offset:-1px"></div>
<div class="t" style="left:96px;top:233px;transform:scaleX(0.793);color:#fff">Media</div>
<div class="a" style="left:63px;top:257px;width:10px;height:1px;background-image:linear-gradient(90deg,#808080 50%,transparent 50%);background-size:2px 1px;background-position:1px 0"></div>
<svg style="left:59px;top:253px" width="9" height="9" viewBox="0 0 9 9" shape-rendering="crispEdges"><path fill="#808080" d="M0 0h9v1h-9zM0 1h1v1h-1zM8 1h1v1h-1zM0 2h1v1h-1zM8 2h1v1h-1zM0 3h1v1h-1zM8 3h1v1h-1zM0 4h1v1h-1zM8 4h1v1h-1zM0 5h1v1h-1zM8 5h1v1h-1zM0 6h1v1h-1zM8 6h1v1h-1zM0 7h1v1h-1zM8 7h1v1h-1zM0 8h9v1h-9z"/><path fill="#fff" d="M1 1h7v1h-7zM1 2h3v1h-3zM5 2h3v1h-3zM1 3h3v1h-3zM5 3h3v1h-3zM1 4h1v1h-1zM7 4h1v1h-1zM1 5h3v1h-3zM5 5h3v1h-3zM1 6h3v1h-3zM5 6h3v1h-3zM1 7h7v1h-7z"/><path fill="#000" d="M4 2h1v1h-1zM4 3h1v1h-1zM2 4h5v1h-5zM4 5h1v1h-1zM4 6h1v1h-1z"/></svg>
<svg style="left:74px;top:248px" width="16" height="16" viewBox="0 0 16 16" shape-rendering="crispEdges"><path fill="#808080" d="M2 2h4v1h-4zM1 3h1v1h-1zM6 3h1v1h-1zM0 4h1v1h-1zM7 4h7v1h-7zM0 5h1v1h-1zM13 5h1v1h-1zM0 6h1v1h-1zM13 6h1v1h-1zM0 7h1v1h-1zM13 7h1v1h-1zM0 8h1v1h-1zM13 8h1v1h-1zM0 9h1v1h-1zM13 9h1v1h-1zM0 10h1v1h-1zM13 10h1v1h-1zM0 11h1v1h-1zM13 11h1v1h-1zM0 12h1v1h-1zM13 12h1v1h-1zM0 13h14v1h-14z"/><path fill="#fff" d="M2 3h1v1h-1zM4 3h1v1h-1zM1 4h1v1h-1zM3 4h1v1h-1zM5 4h1v1h-1zM1 5h12v1h-12zM1 6h1v1h-1zM3 6h1v1h-1zM5 6h1v1h-1zM7 6h1v1h-1zM9 6h1v1h-1zM11 6h1v1h-1zM1 7h2v1h-2zM4 7h1v1h-1zM6 7h1v1h-1zM8 7h1v1h-1zM10 7h1v1h-1zM12 7h1v1h-1zM1 8h1v1h-1zM3 8h1v1h-1zM5 8h1v1h-1zM7 8h1v1h-1zM9 8h1v1h-1zM11 8h1v1h-1zM1 9h2v1h-2zM4 9h1v1h-1zM6 9h1v1h-1zM8 9h1v1h-1zM10 9h1v1h-1zM12 9h1v1h-1zM1 10h1v1h-1zM3 10h1v1h-1zM5 10h1v1h-1zM7 10h1v1h-1zM9 10h1v1h-1zM11 10h1v1h-1zM1 11h2v1h-2zM4 11h1v1h-1zM6 11h1v1h-1zM8 11h1v1h-1zM10 11h1v1h-1zM12 11h1v1h-1zM1 12h1v1h-1zM3 12h1v1h-1zM5 12h1v1h-1zM7 12h1v1h-1zM9 12h1v1h-1zM11 12h1v1h-1z"/><path fill="#ff0" d="M3 3h1v1h-1zM5 3h1v1h-1zM2 4h1v1h-1zM4 4h1v1h-1zM6 4h1v1h-1zM2 6h1v1h-1zM4 6h1v1h-1zM6 6h1v1h-1zM8 6h1v1h-1zM10 6h1v1h-1zM12 6h1v1h-1zM3 7h1v1h-1zM5 7h1v1h-1zM7 7h1v1h-1zM9 7h1v1h-1zM11 7h1v1h-1zM2 8h1v1h-1zM4 8h1v1h-1zM6 8h1v1h-1zM8 8h1v1h-1zM10 8h1v1h-1zM12 8h1v1h-1zM3 9h1v1h-1zM5 9h1v1h-1zM7 9h1v1h-1zM9 9h1v1h-1zM11 9h1v1h-1zM2 10h1v1h-1zM4 10h1v1h-1zM6 10h1v1h-1zM8 10h1v1h-1zM10 10h1v1h-1zM12 10h1v1h-1zM3 11h1v1h-1zM5 11h1v1h-1zM7 11h1v1h-1zM9 11h1v1h-1zM11 11h1v1h-1zM2 12h1v1h-1zM4 12h1v1h-1zM6 12h1v1h-1zM8 12h1v1h-1zM10 12h1v1h-1zM12 12h1v1h-1z"/><path fill="#000" d="M14 5h1v1h-1zM14 6h1v1h-1zM14 7h1v1h-1zM14 8h1v1h-1zM14 9h1v1h-1zM14 10h1v1h-1zM14 11h1v1h-1zM14 12h1v1h-1zM14 13h1v1h-1zM1 14h14v1h-14z"/></svg>
<div class="t" style="left:95px;top:249px;transform:scaleX(0.780)">Profiles</div>
<div class="a" style="left:63px;top:272px;width:10px;height:1px;background-image:linear-gradient(90deg,#808080 50%,transparent 50%);background-size:2px 1px;background-position:1px 0"></div>
<svg style="left:74px;top:264px" width="16" height="16" viewBox="0 0 16 16" shape-rendering="crispEdges"><path fill="#808080" d="M2 2h4v1h-4zM1 3h1v1h-1zM6 3h1v1h-1zM0 4h1v1h-1zM7 4h7v1h-7zM0 5h1v1h-1zM13 5h1v1h-1zM0 6h1v1h-1zM13 6h1v1h-1zM0 7h1v1h-1zM13 7h1v1h-1zM0 8h1v1h-1zM13 8h1v1h-1zM0 9h1v1h-1zM13 9h1v1h-1zM0 10h1v1h-1zM13 10h1v1h-1zM0 11h1v1h-1zM13 11h1v1h-1zM0 12h1v1h-1zM13 12h1v1h-1zM0 13h14v1h-14z"/><path fill="#fff" d="M2 3h1v1h-1zM4 3h1v1h-1zM1 4h1v1h-1zM3 4h1v1h-1zM5 4h1v1h-1zM1 5h12v1h-12zM1 6h1v1h-1zM3 6h1v1h-1zM5 6h1v1h-1zM7 6h1v1h-1zM9 6h1v1h-1zM11 6h1v1h-1zM1 7h2v1h-2zM4 7h1v1h-1zM6 7h1v1h-1zM8 7h1v1h-1zM10 7h1v1h-1zM12 7h1v1h-1zM1 8h1v1h-1zM3 8h1v1h-1zM5 8h1v1h-1zM7 8h1v1h-1zM9 8h1v1h-1zM11 8h1v1h-1zM1 9h2v1h-2zM4 9h1v1h-1zM6 9h1v1h-1zM8 9h1v1h-1zM10 9h1v1h-1zM12 9h1v1h-1zM1 10h1v1h-1zM3 10h1v1h-1zM5 10h1v1h-1zM7 10h1v1h-1zM9 10h1v1h-1zM11 10h1v1h-1zM1 11h2v1h-2zM4 11h1v1h-1zM6 11h1v1h-1zM8 11h1v1h-1zM10 11h1v1h-1zM12 11h1v1h-1zM1 12h1v1h-1zM3 12h1v1h-1zM5 12h1v1h-1zM7 12h1v1h-1zM9 12h1v1h-1zM11 12h1v1h-1z"/><path fill="#ff0" d="M3 3h1v1h-1zM5 3h1v1h-1zM2 4h1v1h-1zM4 4h1v1h-1zM6 4h1v1h-1zM2 6h1v1h-1zM4 6h1v1h-1zM6 6h1v1h-1zM8 6h1v1h-1zM10 6h1v1h-1zM12 6h1v1h-1zM3 7h1v1h-1zM5 7h1v1h-1zM7 7h1v1h-1zM9 7h1v1h-1zM11 7h1v1h-1zM2 8h1v1h-1zM4 8h1v1h-1zM6 8h1v1h-1zM8 8h1v1h-1zM10 8h1v1h-1zM12 8h1v1h-1zM3 9h1v1h-1zM5 9h1v1h-1zM7 9h1v1h-1zM9 9h1v1h-1zM11 9h1v1h-1zM2 10h1v1h-1zM4 10h1v1h-1zM6 10h1v1h-1zM8 10h1v1h-1zM10 10h1v1h-1zM12 10h1v1h-1zM3 11h1v1h-1zM5 11h1v1h-1zM7 11h1v1h-1zM9 11h1v1h-1zM11 11h1v1h-1zM2 12h1v1h-1zM4 12h1v1h-1zM6 12h1v1h-1zM8 12h1v1h-1zM10 12h1v1h-1zM12 12h1v1h-1z"/><path fill="#000" d="M14 5h1v1h-1zM14 6h1v1h-1zM14 7h1v1h-1zM14 8h1v1h-1zM14 9h1v1h-1zM14 10h1v1h-1zM14 11h1v1h-1zM14 12h1v1h-1zM14 13h1v1h-1zM1 14h14v1h-14z"/></svg>
<div class="t" style="left:95px;top:264px;transform:scaleX(0.770)">repair</div>
<div class="a" style="left:63px;top:288px;width:10px;height:1px;background-image:linear-gradient(90deg,#808080 50%,transparent 50%);background-size:2px 1px;background-position:1px 0"></div>
<svg style="left:74px;top:279px" width="16" height="16" viewBox="0 0 16 16" shape-rendering="crispEdges"><path fill="#808080" d="M2 2h4v1h-4zM1 3h1v1h-1zM6 3h1v1h-1zM0 4h1v1h-1zM7 4h7v1h-7zM0 5h1v1h-1zM13 5h1v1h-1zM0 6h1v1h-1zM13 6h1v1h-1zM0 7h1v1h-1zM13 7h1v1h-1zM0 8h1v1h-1zM13 8h1v1h-1zM0 9h1v1h-1zM13 9h1v1h-1zM0 10h1v1h-1zM13 10h1v1h-1zM0 11h1v1h-1zM13 11h1v1h-1zM0 12h1v1h-1zM13 12h1v1h-1zM0 13h14v1h-14z"/><path fill="#fff" d="M2 3h1v1h-1zM4 3h1v1h-1zM1 4h1v1h-1zM3 4h1v1h-1zM5 4h1v1h-1zM1 5h12v1h-12zM1 6h1v1h-1zM3 6h1v1h-1zM5 6h1v1h-1zM7 6h1v1h-1zM9 6h1v1h-1zM11 6h1v1h-1zM1 7h2v1h-2zM4 7h1v1h-1zM6 7h1v1h-1zM8 7h1v1h-1zM10 7h1v1h-1zM12 7h1v1h-1zM1 8h1v1h-1zM3 8h1v1h-1zM5 8h1v1h-1zM7 8h1v1h-1zM9 8h1v1h-1zM11 8h1v1h-1zM1 9h2v1h-2zM4 9h1v1h-1zM6 9h1v1h-1zM8 9h1v1h-1zM10 9h1v1h-1zM12 9h1v1h-1zM1 10h1v1h-1zM3 10h1v1h-1zM5 10h1v1h-1zM7 10h1v1h-1zM9 10h1v1h-1zM11 10h1v1h-1zM1 11h2v1h-2zM4 11h1v1h-1zM6 11h1v1h-1zM8 11h1v1h-1zM10 11h1v1h-1zM12 11h1v1h-1zM1 12h1v1h-1zM3 12h1v1h-1zM5 12h1v1h-1zM7 12h1v1h-1zM9 12h1v1h-1zM11 12h1v1h-1z"/><path fill="#ff0" d="M3 3h1v1h-1zM5 3h1v1h-1zM2 4h1v1h-1zM4 4h1v1h-1zM6 4h1v1h-1zM2 6h1v1h-1zM4 6h1v1h-1zM6 6h1v1h-1zM8 6h1v1h-1zM10 6h1v1h-1zM12 6h1v1h-1zM3 7h1v1h-1zM5 7h1v1h-1zM7 7h1v1h-1zM9 7h1v1h-1zM11 7h1v1h-1zM2 8h1v1h-1zM4 8h1v1h-1zM6 8h1v1h-1zM8 8h1v1h-1zM10 8h1v1h-1zM12 8h1v1h-1zM3 9h1v1h-1zM5 9h1v1h-1zM7 9h1v1h-1zM9 9h1v1h-1zM11 9h1v1h-1zM2 10h1v1h-1zM4 10h1v1h-1zM6 10h1v1h-1zM8 10h1v1h-1zM10 10h1v1h-1zM12 10h1v1h-1zM3 11h1v1h-1zM5 11h1v1h-1zM7 11h1v1h-1zM9 11h1v1h-1zM11 11h1v1h-1zM2 12h1v1h-1zM4 12h1v1h-1zM6 12h1v1h-1zM8 12h1v1h-1zM10 12h1v1h-1zM12 12h1v1h-1z"/><path fill="#000" d="M14 5h1v1h-1zM14 6h1v1h-1zM14 7h1v1h-1zM14 8h1v1h-1zM14 9h1v1h-1zM14 10h1v1h-1zM14 11h1v1h-1zM14 12h1v1h-1zM14 13h1v1h-1zM1 14h14v1h-14z"/></svg>
<div class="t" style="left:95px;top:280px;transform:scaleX(0.839)">SendTo</div>
<div class="a" style="left:63px;top:303px;width:10px;height:1px;background-image:linear-gradient(90deg,#808080 50%,transparent 50%);background-size:2px 1px;background-position:1px 0"></div>
<svg style="left:74px;top:295px" width="16" height="16" viewBox="0 0 16 16" shape-rendering="crispEdges"><path fill="#808080" d="M2 2h4v1h-4zM1 3h1v1h-1zM6 3h1v1h-1zM0 4h1v1h-1zM7 4h7v1h-7zM0 5h1v1h-1zM13 5h1v1h-1zM0 6h1v1h-1zM13 6h1v1h-1zM0 7h1v1h-1zM13 7h1v1h-1zM0 8h1v1h-1zM13 8h1v1h-1zM0 9h1v1h-1zM13 9h1v1h-1zM0 10h1v1h-1zM13 10h1v1h-1zM0 11h1v1h-1zM13 11h1v1h-1zM0 12h1v1h-1zM13 12h1v1h-1zM0 13h14v1h-14z"/><path fill="#fff" d="M2 3h1v1h-1zM4 3h1v1h-1zM1 4h1v1h-1zM3 4h1v1h-1zM5 4h1v1h-1zM1 5h12v1h-12zM1 6h1v1h-1zM3 6h1v1h-1zM5 6h1v1h-1zM7 6h1v1h-1zM9 6h1v1h-1zM11 6h1v1h-1zM1 7h2v1h-2zM4 7h1v1h-1zM6 7h1v1h-1zM8 7h1v1h-1zM10 7h1v1h-1zM12 7h1v1h-1zM1 8h1v1h-1zM3 8h1v1h-1zM5 8h1v1h-1zM7 8h1v1h-1zM9 8h1v1h-1zM11 8h1v1h-1zM1 9h2v1h-2zM4 9h1v1h-1zM6 9h1v1h-1zM8 9h1v1h-1zM10 9h1v1h-1zM12 9h1v1h-1zM1 10h1v1h-1zM3 10h1v1h-1zM5 10h1v1h-1zM7 10h1v1h-1zM9 10h1v1h-1zM11 10h1v1h-1zM1 11h2v1h-2zM4 11h1v1h-1zM6 11h1v1h-1zM8 11h1v1h-1zM10 11h1v1h-1zM12 11h1v1h-1zM1 12h1v1h-1zM3 12h1v1h-1zM5 12h1v1h-1zM7 12h1v1h-1zM9 12h1v1h-1zM11 12h1v1h-1z"/><path fill="#ff0" d="M3 3h1v1h-1zM5 3h1v1h-1zM2 4h1v1h-1zM4 4h1v1h-1zM6 4h1v1h-1zM2 6h1v1h-1zM4 6h1v1h-1zM6 6h1v1h-1zM8 6h1v1h-1zM10 6h1v1h-1zM12 6h1v1h-1zM3 7h1v1h-1zM5 7h1v1h-1zM7 7h1v1h-1zM9 7h1v1h-1zM11 7h1v1h-1zM2 8h1v1h-1zM4 8h1v1h-1zM6 8h1v1h-1zM8 8h1v1h-1zM10 8h1v1h-1zM12 8h1v1h-1zM3 9h1v1h-1zM5 9h1v1h-1zM7 9h1v1h-1zM9 9h1v1h-1zM11 9h1v1h-1zM2 10h1v1h-1zM4 10h1v1h-1zM6 10h1v1h-1zM8 10h1v1h-1zM10 10h1v1h-1zM12 10h1v1h-1zM3 11h1v1h-1zM5 11h1v1h-1zM7 11h1v1h-1zM9 11h1v1h-1zM11 11h1v1h-1zM2 12h1v1h-1zM4 12h1v1h-1zM6 12h1v1h-1zM8 12h1v1h-1zM10 12h1v1h-1zM12 12h1v1h-1z"/><path fill="#000" d="M14 5h1v1h-1zM14 6h1v1h-1zM14 7h1v1h-1zM14 8h1v1h-1zM14 9h1v1h-1zM14 10h1v1h-1zM14 11h1v1h-1zM14 12h1v1h-1zM14 13h1v1h-1zM1 14h14v1h-14z"/></svg>
<div class="t" style="left:95px;top:295px;transform:scaleX(0.775)">system</div>
<div class="a" style="left:63px;top:319px;width:10px;height:1px;background-image:linear-gradient(90deg,#808080 50%,transparent 50%);background-size:2px 1px;background-position:1px 0"></div>
<svg style="left:59px;top:315px" width="9" height="9" viewBox="0 0 9 9" shape-rendering="crispEdges"><path fill="#808080" d="M0 0h9v1h-9zM0 1h1v1h-1zM8 1h1v1h-1zM0 2h1v1h-1zM8 2h1v1h-1zM0 3h1v1h-1zM8 3h1v1h-1zM0 4h1v1h-1zM8 4h1v1h-1zM0 5h1v1h-1zM8 5h1v1h-1zM0 6h1v1h-1zM8 6h1v1h-1zM0 7h1v1h-1zM8 7h1v1h-1zM0 8h9v1h-9z"/><path fill="#fff" d="M1 1h7v1h-7zM1 2h3v1h-3zM5 2h3v1h-3zM1 3h3v1h-3zM5 3h3v1h-3zM1 4h1v1h-1zM7 4h1v1h-1zM1 5h3v1h-3zM5 5h3v1h-3zM1 6h3v1h-3zM5 6h3v1h-3zM1 7h7v1h-7z"/><path fill="#000" d="M4 2h1v1h-1zM4 3h1v1h-1zM2 4h5v1h-5zM4 5h1v1h-1zM4 6h1v1h-1z"/></svg>
<svg style="left:74px;top:310px" width="16" height="16" viewBox="0 0 16 16" shape-rendering="crispEdges"><path fill="#808080" d="M2 2h4v1h-4zM1 3h1v1h-1zM6 3h1v1h-1zM0 4h1v1h-1zM7 4h7v1h-7zM0 5h1v1h-1zM13 5h1v1h-1zM0 6h1v1h-1zM13 6h1v1h-1zM0 7h1v1h-1zM13 7h1v1h-1zM0 8h1v1h-1zM13 8h1v1h-1zM0 9h1v1h-1zM13 9h1v1h-1zM0 10h1v1h-1zM13 10h1v1h-1zM0 11h1v1h-1zM13 11h1v1h-1zM0 12h1v1h-1zM13 12h1v1h-1zM0 13h14v1h-14z"/><path fill="#fff" d="M2 3h1v1h-1zM4 3h1v1h-1zM1 4h1v1h-1zM3 4h1v1h-1zM5 4h1v1h-1zM1 5h12v1h-12zM1 6h1v1h-1zM3 6h1v1h-1zM5 6h1v1h-1zM7 6h1v1h-1zM9 6h1v1h-1zM11 6h1v1h-1zM1 7h2v1h-2zM4 7h1v1h-1zM6 7h1v1h-1zM8 7h1v1h-1zM10 7h1v1h-1zM12 7h1v1h-1zM1 8h1v1h-1zM3 8h1v1h-1zM5 8h1v1h-1zM7 8h1v1h-1zM9 8h1v1h-1zM11 8h1v1h-1zM1 9h2v1h-2zM4 9h1v1h-1zM6 9h1v1h-1zM8 9h1v1h-1zM10 9h1v1h-1zM12 9h1v1h-1zM1 10h1v1h-1zM3 10h1v1h-1zM5 10h1v1h-1zM7 10h1v1h-1zM9 10h1v1h-1zM11 10h1v1h-1zM1 11h2v1h-2zM4 11h1v1h-1zM6 11h1v1h-1zM8 11h1v1h-1zM10 11h1v1h-1zM12 11h1v1h-1zM1 12h1v1h-1zM3 12h1v1h-1zM5 12h1v1h-1zM7 12h1v1h-1zM9 12h1v1h-1zM11 12h1v1h-1z"/><path fill="#ff0" d="M3 3h1v1h-1zM5 3h1v1h-1zM2 4h1v1h-1zM4 4h1v1h-1zM6 4h1v1h-1zM2 6h1v1h-1zM4 6h1v1h-1zM6 6h1v1h-1zM8 6h1v1h-1zM10 6h1v1h-1zM12 6h1v1h-1zM3 7h1v1h-1zM5 7h1v1h-1zM7 7h1v1h-1zM9 7h1v1h-1zM11 7h1v1h-1zM2 8h1v1h-1zM4 8h1v1h-1zM6 8h1v1h-1zM8 8h1v1h-1zM10 8h1v1h-1zM12 8h1v1h-1zM3 9h1v1h-1zM5 9h1v1h-1zM7 9h1v1h-1zM9 9h1v1h-1zM11 9h1v1h-1zM2 10h1v1h-1zM4 10h1v1h-1zM6 10h1v1h-1zM8 10h1v1h-1zM10 10h1v1h-1zM12 10h1v1h-1zM3 11h1v1h-1zM5 11h1v1h-1zM7 11h1v1h-1zM9 11h1v1h-1zM11 11h1v1h-1zM2 12h1v1h-1zM4 12h1v1h-1zM6 12h1v1h-1zM8 12h1v1h-1zM10 12h1v1h-1zM12 12h1v1h-1z"/><path fill="#000" d="M14 5h1v1h-1zM14 6h1v1h-1zM14 7h1v1h-1zM14 8h1v1h-1zM14 9h1v1h-1zM14 10h1v1h-1zM14 11h1v1h-1zM14 12h1v1h-1zM14 13h1v1h-1zM1 14h14v1h-14z"/></svg>
<div class="t" style="left:95px;top:311px;transform:scaleX(0.785)">system32</div>
<div class="a" style="left:27px;top:334px;width:8px;height:1px;background-image:linear-gradient(90deg,#808080 50%,transparent 50%);background-size:2px 1px;background-position:1px 0"></div>
<svg style="left:22px;top:330px" width="9" height="9" viewBox="0 0 9 9" shape-rendering="crispEdges"><path fill="#808080" d="M0 0h9v1h-9zM0 1h1v1h-1zM8 1h1v1h-1zM0 2h1v1h-1zM8 2h1v1h-1zM0 3h1v1h-1zM8 3h1v1h-1zM0 4h1v1h-1zM8 4h1v1h-1zM0 5h1v1h-1zM8 5h1v1h-1zM0 6h1v1h-1zM8 6h1v1h-1zM0 7h1v1h-1zM8 7h1v1h-1zM0 8h9v1h-9z"/><path fill="#fff" d="M1 1h7v1h-7zM1 2h3v1h-3zM5 2h3v1h-3zM1 3h3v1h-3zM5 3h3v1h-3zM1 4h1v1h-1zM7 4h1v1h-1zM1 5h3v1h-3zM5 5h3v1h-3zM1 6h3v1h-3zM5 6h3v1h-3zM1 7h7v1h-7z"/><path fill="#000" d="M4 2h1v1h-1zM4 3h1v1h-1zM2 4h5v1h-5zM4 5h1v1h-1zM4 6h1v1h-1z"/></svg>
<svg style="left:36px;top:326px" width="16" height="16" viewBox="0 0 16 16" shape-rendering="crispEdges"><path fill="#808080" d="M9 2h4v1h-4zM7 3h2v1h-2zM13 3h2v1h-2zM6 4h1v1h-1zM15 4h1v1h-1zM6 5h1v1h-1zM10 5h2v1h-2zM15 5h1v1h-1zM6 6h1v1h-1zM9 6h1v1h-1zM12 6h1v1h-1zM15 6h1v1h-1zM6 7h1v1h-1zM10 7h2v1h-2zM15 7h1v1h-1zM3 8h13v1h-13zM2 9h1v1h-1zM14 9h1v1h-1zM1 10h1v1h-1zM13 10h1v1h-1zM1 11h1v1h-1zM13 11h1v1h-1zM1 12h1v1h-1zM3 12h8v1h-8zM13 12h1v1h-1zM1 13h1v1h-1zM13 13h1v1h-1z"/><path fill="#0ff" d="M9 3h1v1h-1zM7 4h2v1h-2zM7 5h2v1h-2z"/><path fill="#ff0" d="M10 3h1v1h-1zM9 4h2v1h-2zM9 5h1v1h-1zM12 7h2v1h-2z"/><path fill="#fff" d="M11 3h1v1h-1zM11 4h2v1h-2zM12 5h2v1h-2zM10 6h2v1h-2zM13 6h2v1h-2zM3 9h11v1h-11zM2 10h11v1h-11z"/><path fill="#c0c0c0" d="M12 3h1v1h-1zM13 4h2v1h-2zM14 5h1v1h-1zM7 6h2v1h-2zM7 7h3v1h-3zM14 7h1v1h-1zM14 10h1v1h-1zM2 11h11v1h-11zM14 11h1v1h-1zM2 12h1v1h-1zM12 12h1v1h-1zM14 12h1v1h-1zM2 13h11v1h-11z"/><path fill="#000" d="M15 9h1v1h-1zM15 10h1v1h-1zM15 11h1v1h-1zM15 12h1v1h-1zM14 13h1v1h-1zM1 14h13v1h-13z"/><path fill="#008000" d="M11 12h1v1h-1z"/></svg>
<div class="t" style="left:61px;top:326px;transform:scaleX(0.720)">(D:)</div>
</div>
<div class="track" style="left:180px;top:85px;width:16px;height:334px"></div>
<div class="btn" style="left:180px;top:85px;width:16px;height:16px"></div>
<svg style="left:184px;top:91px" width="7" height="4" viewBox="0 0 7 4" shape-rendering="crispEdges"><path fill="#000" d="M3 0h1v1h-1zM2 1h3v1h-3zM1 2h5v1h-5zM0 3h7v1h-7z"/></svg>
<div class="btn" style="left:180px;top:101px;width:16px;height:235px"></div>
<div class="btn" style="left:180px;top:403px;width:16px;height:16px"></div>
<svg style="left:184px;top:409px" width="7" height="4" viewBox="0 0 7 4" shape-rendering="crispEdges"><path fill="#000" d="M0 0h7v1h-7zM1 1h5v1h-5zM2 2h3v1h-3zM3 3h1v1h-1z"/></svg>
<div class="pane" style="left:200px;top:84px;width:423px;height:337px"></div>
<div class="clip" style="left:202px;top:85px;width:419px;height:334px">
<div class="hd" style="left:0px;top:0px;width:219px;height:16px"></div>
<div class="hd" style="left:219px;top:0px;width:59px;height:16px"></div>
<div class="hd" style="left:278px;top:0px;width:117px;height:16px"></div>
<div class="hd" style="left:395px;top:0px;width:63px;height:16px"></div>
<div class="t" style="left:6px;top:1px;transform:scaleX(0.810)">Name</div>
<div class="t" style="left:253px;top:1px;transform:scaleX(0.740)">Size</div>
<div class="t" style="left:285px;top:1px;transform:scaleX(0.848)">Type</div>
<div class="a" style="left:402px;top:6px;width:1px;height:2px;background:#404040"></div>
<svg style="left:2px;top:16px" width="16" height="16" viewBox="0 0 16 16" shape-rendering="crispEdges"><path fill="#808080" d="M2 2h4v1h-4zM1 3h1v1h-1zM6 3h1v1h-1zM0 4h1v1h-1zM7 4h7v1h-7zM0 5h1v1h-1zM13 5h1v1h-1zM0 6h1v1h-1zM13 6h1v1h-1zM0 7h1v1h-1zM13 7h1v1h-1zM0 8h1v1h-1zM13 8h1v1h-1zM0 9h1v1h-1zM13 9h1v1h-1zM0 10h1v1h-1zM13 10h1v1h-1zM0 11h1v1h-1zM13 11h1v1h-1zM0 12h1v1h-1zM13 12h1v1h-1zM0 13h14v1h-14z"/><path fill="#fff" d="M2 3h1v1h-1zM4 3h1v1h-1zM1 4h1v1h-1zM3 4h1v1h-1zM5 4h1v1h-1zM1 5h12v1h-12zM1 6h1v1h-1zM3 6h1v1h-1zM5 6h1v1h-1zM7 6h1v1h-1zM9 6h1v1h-1zM11 6h1v1h-1zM1 7h2v1h-2zM4 7h1v1h-1zM6 7h1v1h-1zM8 7h1v1h-1zM10 7h1v1h-1zM12 7h1v1h-1zM1 8h1v1h-1zM3 8h1v1h-1zM5 8h1v1h-1zM7 8h1v1h-1zM9 8h1v1h-1zM11 8h1v1h-1zM1 9h2v1h-2zM4 9h1v1h-1zM6 9h1v1h-1zM8 9h1v1h-1zM10 9h1v1h-1zM12 9h1v1h-1zM1 10h1v1h-1zM3 10h1v1h-1zM5 10h1v1h-1zM7 10h1v1h-1zM9 10h1v1h-1zM11 10h1v1h-1zM1 11h2v1h-2zM4 11h1v1h-1zM6 11h1v1h-1zM8 11h1v1h-1zM10 11h1v1h-1zM12 11h1v1h-1zM1 12h1v1h-1zM3 12h1v1h-1zM5 12h1v1h-1zM7 12h1v1h-1zM9 12h1v1h-1zM11 12h1v1h-1z"/><path fill="#ff0" d="M3 3h1v1h-1zM5 3h1v1h-1zM2 4h1v1h-1zM4 4h1v1h-1zM6 4h1v1h-1zM2 6h1v1h-1zM4 6h1v1h-1zM6 6h1v1h-1zM8 6h1v1h-1zM10 6h1v1h-1zM12 6h1v1h-1zM3 7h1v1h-1zM5 7h1v1h-1zM7 7h1v1h-1zM9 7h1v1h-1zM11 7h1v1h-1zM2 8h1v1h-1zM4 8h1v1h-1zM6 8h1v1h-1zM8 8h1v1h-1zM10 8h1v1h-1zM12 8h1v1h-1zM3 9h1v1h-1zM5 9h1v1h-1zM7 9h1v1h-1zM9 9h1v1h-1zM11 9h1v1h-1zM2 10h1v1h-1zM4 10h1v1h-1zM6 10h1v1h-1zM8 10h1v1h-1zM10 10h1v1h-1zM12 10h1v1h-1zM3 11h1v1h-1zM5 11h1v1h-1zM7 11h1v1h-1zM9 11h1v1h-1zM11 11h1v1h-1zM2 12h1v1h-1zM4 12h1v1h-1zM6 12h1v1h-1zM8 12h1v1h-1zM10 12h1v1h-1zM12 12h1v1h-1z"/><path fill="#000" d="M14 5h1v1h-1zM14 6h1v1h-1zM14 7h1v1h-1zM14 8h1v1h-1zM14 9h1v1h-1zM14 10h1v1h-1zM14 11h1v1h-1zM14 12h1v1h-1zM14 13h1v1h-1zM1 14h14v1h-14z"/></svg>
<div class="t" style="left:21px;top:18px;transform:scaleX(0.814)">Office97</div>
<div class="t" style="left:285px;top:18px;transform:scaleX(0.779)">File Folder</div>
<div class="a" style="left:402px;top:22px;width:1px;height:1px;background:#000"></div>
<svg style="left:2px;top:33px" width="16" height="16" viewBox="0 0 16 16" shape-rendering="crispEdges"><path fill="#808080" d="M4 1h1v1h-1zM6 1h1v1h-1zM12 1h1v1h-1zM3 2h1v1h-1zM5 2h1v1h-1zM7 2h2v1h-2zM13 2h1v1h-1zM4 3h3v1h-3zM3 5h1v1h-1zM5 5h1v1h-1zM7 5h1v1h-1zM9 5h1v1h-1zM1 11h9v1h-9z"/><path fill="#fff" d="M12 2h1v1h-1zM1 7h1v1h-1zM3 7h1v1h-1zM5 7h1v1h-1zM7 7h1v1h-1zM9 7h1v1h-1zM1 8h9v1h-9zM1 9h1v1h-1zM4 9h1v1h-1zM6 9h1v1h-1zM8 9h2v1h-2zM1 10h9v1h-9z"/><path fill="#000" d="M8 3h2v1h-2zM12 3h4v1h-4zM0 4h10v1h-10zM15 4h1v1h-1zM0 5h1v1h-1zM2 5h1v1h-1zM4 5h1v1h-1zM6 5h1v1h-1zM8 5h1v1h-1zM10 5h1v1h-1zM15 5h1v1h-1zM0 6h11v1h-11zM15 6h1v1h-1zM0 7h1v1h-1zM2 7h1v1h-1zM4 7h1v1h-1zM6 7h1v1h-1zM8 7h1v1h-1zM10 7h1v1h-1zM15 7h1v1h-1zM0 8h1v1h-1zM10 8h1v1h-1zM15 8h1v1h-1zM0 9h1v1h-1zM10 9h1v1h-1zM15 9h1v1h-1zM0 10h1v1h-1zM10 10h1v1h-1zM15 10h1v1h-1zM0 11h1v1h-1zM10 11h1v1h-1zM15 11h1v1h-1zM1 12h10v1h-10zM15 12h1v1h-1zM4 13h1v1h-1zM15 13h1v1h-1zM4 14h1v1h-1zM15 14h1v1h-1zM4 15h12v1h-12z"/><path fill="#ff0" d="M1 5h1v1h-1z"/><path fill="#f00" d="M2 9h2v1h-2z"/><path fill="#00f" d="M5 9h1v1h-1z"/><path fill="#008000" d="M7 9h1v1h-1z"/></svg>
<div class="t" style="left:21px;top:34px;transform:scaleX(0.828)">Bach&#x27;s Brandenburg Concerto No. 3.RMI</div>
<div class="t r" style="left:192px;top:34px;transform:scaleX(0.830)">142KB</div>
<div class="t" style="left:285px;top:34px;transform:scaleX(0.774)">Media Clip</div>
<div class="a" style="left:402px;top:38px;width:1px;height:1px;background:#000"></div>
<svg style="left:2px;top:49px" width="16" height="16" viewBox="0 0 16 16" shape-rendering="crispEdges"><path fill="#808080" d="M4 1h1v1h-1zM6 1h1v1h-1zM12 1h1v1h-1zM3 2h1v1h-1zM5 2h1v1h-1zM7 2h2v1h-2zM13 2h1v1h-1zM4 3h3v1h-3zM3 5h1v1h-1zM5 5h1v1h-1zM7 5h1v1h-1zM9 5h1v1h-1zM1 11h9v1h-9z"/><path fill="#fff" d="M12 2h1v1h-1zM1 7h1v1h-1zM3 7h1v1h-1zM5 7h1v1h-1zM7 7h1v1h-1zM9 7h1v1h-1zM1 8h9v1h-9zM1 9h1v1h-1zM4 9h1v1h-1zM6 9h1v1h-1zM8 9h2v1h-2zM1 10h9v1h-9z"/><path fill="#000" d="M8 3h2v1h-2zM12 3h4v1h-4zM0 4h10v1h-10zM15 4h1v1h-1zM0 5h1v1h-1zM2 5h1v1h-1zM4 5h1v1h-1zM6 5h1v1h-1zM8 5h1v1h-1zM10 5h1v1h-1zM15 5h1v1h-1zM0 6h11v1h-11zM15 6h1v1h-1zM0 7h1v1h-1zM2 7h1v1h-1zM4 7h1v1h-1zM6 7h1v1h-1zM8 7h1v1h-1zM10 7h1v1h-1zM15 7h1v1h-1zM0 8h1v1h-1zM10 8h1v1h-1zM15 8h1v1h-1zM0 9h1v1h-1zM10 9h1v1h-1zM15 9h1v1h-1zM0 10h1v1h-1zM10 10h1v1h-1zM15 10h1v1h-1zM0 11h1v1h-1zM10 11h1v1h-1zM15 11h1v1h-1zM1 12h10v1h-10zM15 12h1v1h-1zM4 13h1v1h-1zM15 13h1v1h-1zM4 14h1v1h-1zM15 14h1v1h-1zM4 15h12v1h-12z"/><path fill="#ff0" d="M1 5h1v1h-1z"/><path fill="#f00" d="M2 9h2v1h-2z"/><path fill="#00f" d="M5 9h1v1h-1z"/><path fill="#008000" d="M7 9h1v1h-1z"/></svg>
<div class="t" style="left:21px;top:51px;transform:scaleX(0.839)">Beethovens 5th Symphony.RMI</div>
<div class="t r" style="left:192px;top:51px;transform:scaleX(0.830)">91KB</div>
<div class="t" style="left:285px;top:51px;transform:scaleX(0.774)">Media Clip</div>
<div class="a" style="left:402px;top:55px;width:1px;height:1px;background:#000"></div>
<svg style="left:2px;top:66px" width="16" height="16" viewBox="0 0 16 16" shape-rendering="crispEdges"><path fill="#808080" d="M4 1h1v1h-1zM6 1h1v1h-1zM12 1h1v1h-1zM3 2h1v1h-1zM5 2h1v1h-1zM7 2h2v1h-2zM13 2h1v1h-1zM4 3h3v1h-3zM3 5h1v1h-1zM5 5h1v1h-1zM7 5h1v1h-1zM9 5h1v1h-1zM1 11h9v1h-9z"/><path fill="#fff" d="M12 2h1v1h-1zM1 7h1v1h-1zM3 7h1v1h-1zM5 7h1v1h-1zM7 7h1v1h-1zM9 7h1v1h-1zM1 8h9v1h-9zM1 9h1v1h-1zM4 9h1v1h-1zM6 9h1v1h-1zM8 9h2v1h-2zM1 10h9v1h-9z"/><path fill="#000" d="M8 3h2v1h-2zM12 3h4v1h-4zM0 4h10v1h-10zM15 4h1v1h-1zM0 5h1v1h-1zM2 5h1v1h-1zM4 5h1v1h-1zM6 5h1v1h-1zM8 5h1v1h-1zM10 5h1v1h-1zM15 5h1v1h-1zM0 6h11v1h-11zM15 6h1v1h-1zM0 7h1v1h-1zM2 7h1v1h-1zM4 7h1v1h-1zM6 7h1v1h-1zM8 7h1v1h-1zM10 7h1v1h-1zM15 7h1v1h-1zM0 8h1v1h-1zM10 8h1v1h-1zM15 8h1v1h-1zM0 9h1v1h-1zM10 9h1v1h-1zM15 9h1v1h-1zM0 10h1v1h-1zM10 10h1v1h-1zM15 10h1v1h-1zM0 11h1v1h-1zM10 11h1v1h-1zM15 11h1v1h-1zM1 12h10v1h-10zM15 12h1v1h-1zM4 13h1v1h-1zM15 13h1v1h-1zM4 14h1v1h-1zM15 14h1v1h-1zM4 15h12v1h-12z"/><path fill="#ff0" d="M1 5h1v1h-1z"/><path fill="#f00" d="M2 9h2v1h-2z"/><path fill="#00f" d="M5 9h1v1h-1z"/><path fill="#008000" d="M7 9h1v1h-1z"/></svg>
<div class="t" style="left:21px;top:67px;transform:scaleX(0.831)">Beethovens Fur Elise.RMI</div>
<div class="t r" style="left:192px;top:67px;transform:scaleX(0.830)">21KB</div>
<div class="t" style="left:285px;top:67px;transform:scaleX(0.774)">Media Clip</div>
<div class="a" style="left:402px;top:71px;width:1px;height:1px;background:#000"></div>
<svg style="left:2px;top:82px" width="16" height="16" viewBox="0 0 16 16" shape-rendering="crispEdges"><path fill="#808080" d="M4 1h1v1h-1zM6 1h1v1h-1zM12 1h1v1h-1zM3 2h1v1h-1zM5 2h1v1h-1zM7 2h2v1h-2zM13 2h1v1h-1zM4 3h3v1h-3zM3 5h1v1h-1zM5 5h1v1h-1zM7 5h1v1h-1zM9 5h1v1h-1zM1 11h9v1h-9z"/><path fill="#fff" d="M12 2h1v1h-1zM1 7h1v1h-1zM3 7h1v1h-1zM5 7h1v1h-1zM7 7h1v1h-1zM9 7h1v1h-1zM1 8h9v1h-9zM1 9h1v1h-1zM4 9h1v1h-1zM6 9h1v1h-1zM8 9h2v1h-2zM1 10h9v1h-9z"/><path fill="#000" d="M8 3h2v1h-2zM12 3h4v1h-4zM0 4h10v1h-10zM15 4h1v1h-1zM0 5h1v1h-1zM2 5h1v1h-1zM4 5h1v1h-1zM6 5h1v1h-1zM8 5h1v1h-1zM10 5h1v1h-1zM15 5h1v1h-1zM0 6h11v1h-11zM15 6h1v1h-1zM0 7h1v1h-1zM2 7h1v1h-1zM4 7h1v1h-1zM6 7h1v1h-1zM8 7h1v1h-1zM10 7h1v1h-1zM15 7h1v1h-1zM0 8h1v1h-1zM10 8h1v1h-1zM15 8h1v1h-1zM0 9h1v1h-1zM10 9h1v1h-1zM15 9h1v1h-1zM0 10h1v1h-1zM10 10h1v1h-1zM15 10h1v1h-1zM0 11h1v1h-1zM10 11h1v1h-1zM15 11h1v1h-1zM1 12h10v1h-10zM15 12h1v1h-1zM4 13h1v1h-1zM15 13h1v1h-1zM4 14h1v1h-1zM15 14h1v1h-1zM4 15h12v1h-12z"/><path fill="#ff0" d="M1 5h1v1h-1z"/><path fill="#f00" d="M2 9h2v1h-2z"/><path fill="#00f" d="M5 9h1v1h-1z"/><path fill="#008000" d="M7 9h1v1h-1z"/></svg>
<div class="t" style="left:21px;top:84px;transform:scaleX(0.819)">Dance of the Sugar-Plum Fairy.RMI</div>
<div class="t r" style="left:192px;top:84px;transform:scaleX(0.830)">21KB</div>
<div class="t" style="left:285px;top:84px;transform:scaleX(0.774)">Media Clip</div>
<div class="a" style="left:402px;top:88px;width:1px;height:1px;background:#000"></div>
<svg style="left:2px;top:99px" width="16" height="16" viewBox="0 0 16 16" shape-rendering="crispEdges"><path fill="#808080" d="M4 1h1v1h-1zM6 1h1v1h-1zM12 1h1v1h-1zM3 2h1v1h-1zM5 2h1v1h-1zM7 2h2v1h-2zM13 2h1v1h-1zM4 3h3v1h-3zM3 5h1v1h-1zM5 5h1v1h-1zM7 5h1v1h-1zM9 5h1v1h-1zM1 11h9v1h-9z"/><path fill="#fff" d="M12 2h1v1h-1zM1 7h1v1h-1zM3 7h1v1h-1zM5 7h1v1h-1zM7 7h1v1h-1zM9 7h1v1h-1zM1 8h9v1h-9zM1 9h1v1h-1zM4 9h1v1h-1zM6 9h1v1h-1zM8 9h2v1h-2zM1 10h9v1h-9z"/><path fill="#000" d="M8 3h2v1h-2zM12 3h4v1h-4zM0 4h10v1h-10zM15 4h1v1h-1zM0 5h1v1h-1zM2 5h1v1h-1zM4 5h1v1h-1zM6 5h1v1h-1zM8 5h1v1h-1zM10 5h1v1h-1zM15 5h1v1h-1zM0 6h11v1h-11zM15 6h1v1h-1zM0 7h1v1h-1zM2 7h1v1h-1zM4 7h1v1h-1zM6 7h1v1h-1zM8 7h1v1h-1zM10 7h1v1h-1zM15 7h1v1h-1zM0 8h1v1h-1zM10 8h1v1h-1zM15 8h1v1h-1zM0 9h1v1h-1zM10 9h1v1h-1zM15 9h1v1h-1zM0 10h1v1h-1zM10 10h1v1h-1zM15 10h1v1h-1zM0 11h1v1h-1zM10 11h1v1h-1zM15 11h1v1h-1zM1 12h10v1h-10zM15 12h1v1h-1zM4 13h1v1h-1zM15 13h1v1h-1zM4 14h1v1h-1zM15 14h1v1h-1zM4 15h12v1h-12z"/><path fill="#ff0" d="M1 5h1v1h-1z"/><path fill="#f00" d="M2 9h2v1h-2z"/><path fill="#00f" d="M5 9h1v1h-1z"/><path fill="#008000" d="M7 9h1v1h-1z"/></svg>
<div class="t" style="left:21px;top:101px;transform:scaleX(0.811)">Debussy&#x27;s Claire de Lune.RMI</div>
<div class="t r" style="left:192px;top:101px;transform:scaleX(0.830)">28KB</div>
<div class="t" style="left:285px;top:101px;transform:scaleX(0.774)">Media Clip</div>
<div class="a" style="left:402px;top:105px;width:1px;height:1px;background:#000"></div>
<svg style="left:2px;top:115px" width="16" height="16" viewBox="0 0 16 16" shape-rendering="crispEdges"><path fill="#808080" d="M4 1h1v1h-1zM6 1h1v1h-1zM12 1h1v1h-1zM3 2h1v1h-1zM5 2h1v1h-1zM7 2h2v1h-2zM13 2h1v1h-1zM4 3h3v1h-3zM3 5h1v1h-1zM5 5h1v1h-1zM7 5h1v1h-1zM9 5h1v1h-1zM1 11h9v1h-9z"/><path fill="#fff" d="M12 2h1v1h-1zM1 7h1v1h-1zM3 7h1v1h-1zM5 7h1v1h-1zM7 7h1v1h-1zM9 7h1v1h-1zM1 8h9v1h-9zM1 9h1v1h-1zM4 9h1v1h-1zM6 9h1v1h-1zM8 9h2v1h-2zM1 10h9v1h-9z"/><path fill="#000" d="M8 3h2v1h-2zM12 3h4v1h-4zM0 4h10v1h-10zM15 4h1v1h-1zM0 5h1v1h-1zM2 5h1v1h-1zM4 5h1v1h-1zM6 5h1v1h-1zM8 5h1v1h-1zM10 5h1v1h-1zM15 5h1v1h-1zM0 6h11v1h-11zM15 6h1v1h-1zM0 7h1v1h-1zM2 7h1v1h-1zM4 7h1v1h-1zM6 7h1v1h-1zM8 7h1v1h-1zM10 7h1v1h-1zM15 7h1v1h-1zM0 8h1v1h-1zM10 8h1v1h-1zM15 8h1v1h-1zM0 9h1v1h-1zM10 9h1v1h-1zM15 9h1v1h-1zM0 10h1v1h-1zM10 10h1v1h-1zM15 10h1v1h-1zM0 11h1v1h-1zM10 11h1v1h-1zM15 11h1v1h-1zM1 12h10v1h-10zM15 12h1v1h-1zM4 13h1v1h-1zM15 13h1v1h-1zM4 14h1v1h-1zM15 14h1v1h-1zM4 15h12v1h-12z"/><path fill="#ff0" d="M1 5h1v1h-1z"/><path fill="#f00" d="M2 9h2v1h-2z"/><path fill="#00f" d="M5 9h1v1h-1z"/><path fill="#008000" d="M7 9h1v1h-1z"/></svg>
<div class="t" style="left:21px;top:117px;transform:scaleX(0.824)">In the Hall of the Mountain King.RMI</div>
<div class="t r" style="left:192px;top:117px;transform:scaleX(0.830)">38KB</div>
<div class="t" style="left:285px;top:117px;transform:scaleX(0.774)">Media Clip</div>
<div class="a" style="left:402px;top:121px;width:1px;height:1px;background:#000"></div>
<svg style="left:2px;top:132px" width="16" height="16" viewBox="0 0 16 16" shape-rendering="crispEdges"><path fill="#808080" d="M4 1h1v1h-1zM6 1h1v1h-1zM12 1h1v1h-1zM3 2h1v1h-1zM5 2h1v1h-1zM7 2h2v1h-2zM13 2h1v1h-1zM4 3h3v1h-3zM3 5h1v1h-1zM5 5h1v1h-1zM7 5h1v1h-1zM9 5h1v1h-1zM1 11h9v1h-9z"/><path fill="#fff" d="M12 2h1v1h-1zM1 7h1v1h-1zM3 7h1v1h-1zM5 7h1v1h-1zM7 7h1v1h-1zM9 7h1v1h-1zM1 8h9v1h-9zM1 9h1v1h-1zM4 9h1v1h-1zM6 9h1v1h-1zM8 9h2v1h-2zM1 10h9v1h-9z"/><path fill="#000" d="M8 3h2v1h-2zM12 3h4v1h-4zM0 4h10v1h-10zM15 4h1v1h-1zM0 5h1v1h-1zM2 5h1v1h-1zM4 5h1v1h-1zM6 5h1v1h-1zM8 5h1v1h-1zM10 5h1v1h-1zM15 5h1v1h-1zM0 6h11v1h-11zM15 6h1v1h-1zM0 7h1v1h-1zM2 7h1v1h-1zM4 7h1v1h-1zM6 7h1v1h-1zM8 7h1v1h-1zM10 7h1v1h-1zM15 7h1v1h-1zM0 8h1v1h-1zM10 8h1v1h-1zM15 8h1v1h-1zM0 9h1v1h-1zM10 9h1v1h-1zM15 9h1v1h-1zM0 10h1v1h-1zM10 10h1v1h-1zM15 10h1v1h-1zM0 11h1v1h-1zM10 11h1v1h-1zM15 11h1v1h-1zM1 12h10v1h-10zM15 12h1v1h-1zM4 13h1v1h-1zM15 13h1v1h-1zM4 14h1v1h-1zM15 14h1v1h-1zM4 15h12v1h-12z"/><path fill="#ff0" d="M1 5h1v1h-1z"/><path fill="#f00" d="M2 9h2v1h-2z"/><path fill="#00f" d="M5 9h1v1h-1z"/><path fill="#008000" d="M7 9h1v1h-1z"/></svg>
<div class="t" style="left:21px;top:134px;transform:scaleX(0.814)">Mozart&#x27;s Symphony No. 40.RMI</div>
<div class="t r" style="left:192px;top:134px;transform:scaleX(0.830)">18KB</div>
<div class="t" style="left:285px;top:134px;transform:scaleX(0.774)">Media Clip</div>
<div class="a" style="left:402px;top:138px;width:1px;height:1px;background:#000"></div>
<svg style="left:2px;top:149px" width="16" height="16" viewBox="0 0 16 16" shape-rendering="crispEdges"><path fill="#808080" d="M2 0h10v1h-10zM2 1h1v1h-1zM11 1h2v1h-2zM2 2h1v1h-1zM11 2h1v1h-1zM13 2h1v1h-1zM2 3h1v1h-1zM2 4h1v1h-1zM2 5h1v1h-1zM2 6h1v1h-1zM2 7h1v1h-1zM2 8h1v1h-1zM2 9h1v1h-1zM2 10h1v1h-1zM2 11h1v1h-1zM2 12h1v1h-1zM2 13h1v1h-1zM2 14h1v1h-1z"/><path fill="#fff" d="M3 1h8v1h-8zM3 2h8v1h-8zM12 2h1v1h-1zM3 3h3v1h-3zM8 3h3v1h-3zM3 4h3v1h-3zM10 4h4v1h-4zM3 5h3v1h-3zM7 5h1v1h-1zM11 5h3v1h-3zM3 6h3v1h-3zM7 6h3v1h-3zM11 6h3v1h-3zM3 7h3v1h-3zM7 7h3v1h-3zM11 7h3v1h-3zM3 8h3v1h-3zM7 8h3v1h-3zM11 8h3v1h-3zM3 9h1v1h-1zM7 9h3v1h-3zM11 9h3v1h-3zM7 10h1v1h-1zM11 10h3v1h-3zM3 11h1v1h-1zM6 11h1v1h-1zM11 11h3v1h-3zM3 12h5v1h-5zM10 12h4v1h-4zM3 13h11v1h-11zM3 14h11v1h-11z"/><path fill="#000" d="M6 3h2v1h-2zM11 3h4v1h-4zM6 4h4v1h-4zM14 4h1v1h-1zM6 5h1v1h-1zM8 5h3v1h-3zM14 5h1v1h-1zM6 6h1v1h-1zM10 6h1v1h-1zM14 6h1v1h-1zM6 7h1v1h-1zM10 7h1v1h-1zM14 7h1v1h-1zM6 8h1v1h-1zM10 8h1v1h-1zM14 8h1v1h-1zM4 9h3v1h-3zM10 9h1v1h-1zM14 9h1v1h-1zM3 10h4v1h-4zM8 10h3v1h-3zM14 10h1v1h-1zM4 11h2v1h-2zM7 11h4v1h-4zM14 11h1v1h-1zM8 12h2v1h-2zM14 12h1v1h-1zM14 13h1v1h-1zM14 14h1v1h-1zM2 15h13v1h-13z"/></svg>
<div class="t" style="left:21px;top:150px;transform:scaleX(0.802)">canyon.mid</div>
<div class="t r" style="left:192px;top:150px;transform:scaleX(0.830)">34KB</div>
<div class="t" style="left:285px;top:150px;transform:scaleX(0.845)">MIDI Sequence</div>
<div class="a" style="left:402px;top:154px;width:1px;height:1px;background:#000"></div>
<svg style="left:2px;top:165px" width="16" height="16" viewBox="0 0 16 16" shape-rendering="crispEdges"><path fill="#808080" d="M2 0h10v1h-10zM2 1h1v1h-1zM11 1h2v1h-2zM2 2h1v1h-1zM11 2h1v1h-1zM13 2h1v1h-1zM2 3h1v1h-1zM2 4h1v1h-1zM2 5h1v1h-1zM2 6h1v1h-1zM2 7h1v1h-1zM2 8h1v1h-1zM2 9h1v1h-1zM2 10h1v1h-1zM2 11h1v1h-1zM2 12h1v1h-1zM2 13h1v1h-1zM2 14h1v1h-1z"/><path fill="#fff" d="M3 1h8v1h-8zM3 2h8v1h-8zM12 2h1v1h-1zM3 3h3v1h-3zM8 3h3v1h-3zM3 4h3v1h-3zM10 4h4v1h-4zM3 5h3v1h-3zM7 5h1v1h-1zM11 5h3v1h-3zM3 6h3v1h-3zM7 6h3v1h-3zM11 6h3v1h-3zM3 7h3v1h-3zM7 7h3v1h-3zM11 7h3v1h-3zM3 8h3v1h-3zM7 8h3v1h-3zM11 8h3v1h-3zM3 9h1v1h-1zM7 9h3v1h-3zM11 9h3v1h-3zM7 10h1v1h-1zM11 10h3v1h-3zM3 11h1v1h-1zM6 11h1v1h-1zM11 11h3v1h-3zM3 12h5v1h-5zM10 12h4v1h-4zM3 13h11v1h-11zM3 14h11v1h-11z"/><path fill="#000" d="M6 3h2v1h-2zM11 3h4v1h-4zM6 4h4v1h-4zM14 4h1v1h-1zM6 5h1v1h-1zM8 5h3v1h-3zM14 5h1v1h-1zM6 6h1v1h-1zM10 6h1v1h-1zM14 6h1v1h-1zM6 7h1v1h-1zM10 7h1v1h-1zM14 7h1v1h-1zM6 8h1v1h-1zM10 8h1v1h-1zM14 8h1v1h-1zM4 9h3v1h-3zM10 9h1v1h-1zM14 9h1v1h-1zM3 10h4v1h-4zM8 10h3v1h-3zM14 10h1v1h-1zM4 11h2v1h-2zM7 11h4v1h-4zM14 11h1v1h-1zM8 12h2v1h-2zM14 12h1v1h-1zM14 13h1v1h-1zM14 14h1v1h-1zM2 15h13v1h-13z"/></svg>
<div class="t" style="left:21px;top:167px;transform:scaleX(0.788)">passport.mid</div>
<div class="t r" style="left:192px;top:167px;transform:scaleX(0.830)">40KB</div>
<div class="t" style="left:285px;top:167px;transform:scaleX(0.845)">MIDI Sequence</div>
<div class="a" style="left:402px;top:171px;width:1px;height:1px;background:#000"></div>
<svg style="left:2px;top:182px" width="16" height="16" viewBox="0 0 16 16" shape-rendering="crispEdges"><path fill="#808080" d="M4 0h9v1h-9zM4 1h1v1h-1zM12 1h2v1h-2zM4 2h1v1h-1zM12 2h1v1h-1zM14 2h1v1h-1zM4 3h1v1h-1zM11 5h1v1h-1zM10 6h1v1h-1zM10 8h3v1h-3zM10 10h1v1h-1zM11 11h1v1h-1zM4 12h1v1h-1zM4 13h1v1h-1zM4 14h1v1h-1z"/><path fill="#fff" d="M5 1h7v1h-7zM5 2h7v1h-7zM13 2h1v1h-1zM7 3h5v1h-5zM7 4h8v1h-8zM5 5h1v1h-1zM8 5h3v1h-3zM12 5h3v1h-3zM4 6h2v1h-2zM8 6h2v1h-2zM11 6h4v1h-4zM3 7h3v1h-3zM9 7h6v1h-6zM3 8h3v1h-3zM9 8h1v1h-1zM13 8h2v1h-2zM4 9h2v1h-2zM8 9h7v1h-7zM5 10h1v1h-1zM8 10h2v1h-2zM11 10h4v1h-4zM7 11h4v1h-4zM12 11h3v1h-3zM7 12h8v1h-8zM5 13h10v1h-10zM5 14h10v1h-10z"/><path fill="#808000" d="M5 3h2v1h-2zM3 4h2v1h-2zM2 5h1v1h-1zM1 6h1v1h-1zM0 7h1v1h-1zM0 8h1v1h-1zM1 9h1v1h-1zM2 10h1v1h-1zM3 11h2v1h-2zM5 12h2v1h-2z"/><path fill="#000" d="M12 3h4v1h-4zM6 4h1v1h-1zM15 4h1v1h-1zM6 5h2v1h-2zM15 5h1v1h-1zM7 6h1v1h-1zM15 6h1v1h-1zM7 7h2v1h-2zM15 7h1v1h-1zM7 8h2v1h-2zM15 8h1v1h-1zM7 9h1v1h-1zM15 9h1v1h-1zM6 10h2v1h-2zM15 10h1v1h-1zM6 11h1v1h-1zM15 11h1v1h-1zM15 12h1v1h-1zM15 13h1v1h-1zM15 14h1v1h-1zM4 15h12v1h-12z"/><path fill="#ff0" d="M5 4h1v1h-1zM3 5h2v1h-2zM2 6h2v1h-2zM6 6h1v1h-1zM1 7h2v1h-2zM6 7h1v1h-1zM1 8h2v1h-2zM6 8h1v1h-1zM2 9h2v1h-2zM6 9h1v1h-1zM3 10h2v1h-2zM5 11h1v1h-1z"/></svg>
<div class="t" style="left:21px;top:183px;transform:scaleX(0.822)">chimes.wav</div>
<div class="t r" style="left:192px;top:183px;transform:scaleX(0.830)">16KB</div>
<div class="t" style="left:285px;top:183px;transform:scaleX(0.862)">Wave Sound</div>
<div class="a" style="left:402px;top:187px;width:1px;height:1px;background:#000"></div>
<svg style="left:2px;top:198px" width="16" height="16" viewBox="0 0 16 16" shape-rendering="crispEdges"><path fill="#808080" d="M4 0h9v1h-9zM4 1h1v1h-1zM12 1h2v1h-2zM4 2h1v1h-1zM12 2h1v1h-1zM14 2h1v1h-1zM4 3h1v1h-1zM11 5h1v1h-1zM10 6h1v1h-1zM10 8h3v1h-3zM10 10h1v1h-1zM11 11h1v1h-1zM4 12h1v1h-1zM4 13h1v1h-1zM4 14h1v1h-1z"/><path fill="#fff" d="M5 1h7v1h-7zM5 2h7v1h-7zM13 2h1v1h-1zM7 3h5v1h-5zM7 4h8v1h-8zM5 5h1v1h-1zM8 5h3v1h-3zM12 5h3v1h-3zM4 6h2v1h-2zM8 6h2v1h-2zM11 6h4v1h-4zM3 7h3v1h-3zM9 7h6v1h-6zM3 8h3v1h-3zM9 8h1v1h-1zM13 8h2v1h-2zM4 9h2v1h-2zM8 9h7v1h-7zM5 10h1v1h-1zM8 10h2v1h-2zM11 10h4v1h-4zM7 11h4v1h-4zM12 11h3v1h-3zM7 12h8v1h-8zM5 13h10v1h-10zM5 14h10v1h-10z"/><path fill="#808000" d="M5 3h2v1h-2zM3 4h2v1h-2zM2 5h1v1h-1zM1 6h1v1h-1zM0 7h1v1h-1zM0 8h1v1h-1zM1 9h1v1h-1zM2 10h1v1h-1zM3 11h2v1h-2zM5 12h2v1h-2z"/><path fill="#000" d="M12 3h4v1h-4zM6 4h1v1h-1zM15 4h1v1h-1zM6 5h2v1h-2zM15 5h1v1h-1zM7 6h1v1h-1zM15 6h1v1h-1zM7 7h2v1h-2zM15 7h1v1h-1zM7 8h2v1h-2zM15 8h1v1h-1zM7 9h1v1h-1zM15 9h1v1h-1zM6 10h2v1h-2zM15 10h1v1h-1zM6 11h1v1h-1zM15 11h1v1h-1zM15 12h1v1h-1zM15 13h1v1h-1zM15 14h1v1h-1zM4 15h12v1h-12z"/><path fill="#ff0" d="M5 4h1v1h-1zM3 5h2v1h-2zM2 6h2v1h-2zM6 6h1v1h-1zM1 7h2v1h-2zM6 7h1v1h-1zM1 8h2v1h-2zM6 8h1v1h-1zM2 9h2v1h-2zM6 9h1v1h-1zM3 10h2v1h-2zM5 11h1v1h-1z"/></svg>
<div class="t" style="left:21px;top:200px;transform:scaleX(0.848)">chord.wav</div>
<div class="t r" style="left:192px;top:200px;transform:scaleX(0.830)">25KB</div>
<div class="t" style="left:285px;top:200px;transform:scaleX(0.862)">Wave Sound</div>
<div class="a" style="left:402px;top:204px;width:1px;height:1px;background:#000"></div>
<svg style="left:2px;top:215px" width="16" height="16" viewBox="0 0 16 16" shape-rendering="crispEdges"><path fill="#808080" d="M4 0h9v1h-9zM4 1h1v1h-1zM12 1h2v1h-2zM4 2h1v1h-1zM12 2h1v1h-1zM14 2h1v1h-1zM4 3h1v1h-1zM11 5h1v1h-1zM10 6h1v1h-1zM10 8h3v1h-3zM10 10h1v1h-1zM11 11h1v1h-1zM4 12h1v1h-1zM4 13h1v1h-1zM4 14h1v1h-1z"/><path fill="#fff" d="M5 1h7v1h-7zM5 2h7v1h-7zM13 2h1v1h-1zM7 3h5v1h-5zM7 4h8v1h-8zM5 5h1v1h-1zM8 5h3v1h-3zM12 5h3v1h-3zM4 6h2v1h-2zM8 6h2v1h-2zM11 6h4v1h-4zM3 7h3v1h-3zM9 7h6v1h-6zM3 8h3v1h-3zM9 8h1v1h-1zM13 8h2v1h-2zM4 9h2v1h-2zM8 9h7v1h-7zM5 10h1v1h-1zM8 10h2v1h-2zM11 10h4v1h-4zM7 11h4v1h-4zM12 11h3v1h-3zM7 12h8v1h-8zM5 13h10v1h-10zM5 14h10v1h-10z"/><path fill="#808000" d="M5 3h2v1h-2zM3 4h2v1h-2zM2 5h1v1h-1zM1 6h1v1h-1zM0 7h1v1h-1zM0 8h1v1h-1zM1 9h1v1h-1zM2 10h1v1h-1zM3 11h2v1h-2zM5 12h2v1h-2z"/><path fill="#000" d="M12 3h4v1h-4zM6 4h1v1h-1zM15 4h1v1h-1zM6 5h2v1h-2zM15 5h1v1h-1zM7 6h1v1h-1zM15 6h1v1h-1zM7 7h2v1h-2zM15 7h1v1h-1zM7 8h2v1h-2zM15 8h1v1h-1zM7 9h1v1h-1zM15 9h1v1h-1zM6 10h2v1h-2zM15 10h1v1h-1zM6 11h1v1h-1zM15 11h1v1h-1zM15 12h1v1h-1zM15 13h1v1h-1zM15 14h1v1h-1zM4 15h12v1h-12z"/><path fill="#ff0" d="M5 4h1v1h-1zM3 5h2v1h-2zM2 6h2v1h-2zM6 6h1v1h-1zM1 7h2v1h-2zM6 7h1v1h-1zM1 8h2v1h-2zM6 8h1v1h-1zM2 9h2v1h-2zM6 9h1v1h-1zM3 10h2v1h-2zM5 11h1v1h-1z"/></svg>
<div class="t" style="left:21px;top:216px;transform:scaleX(0.841)">ding.wav</div>
<div class="t r" style="left:192px;top:216px;transform:scaleX(0.830)">12KB</div>
<div class="t" style="left:285px;top:216px;transform:scaleX(0.862)">Wave Sound</div>
<div class="a" style="left:402px;top:220px;width:1px;height:1px;background:#000"></div>
<svg style="left:2px;top:231px" width="16" height="16" viewBox="0 0 16 16" shape-rendering="crispEdges"><path fill="#808080" d="M4 0h9v1h-9zM4 1h1v1h-1zM12 1h2v1h-2zM4 2h1v1h-1zM12 2h1v1h-1zM14 2h1v1h-1zM4 3h1v1h-1zM11 5h1v1h-1zM10 6h1v1h-1zM10 8h3v1h-3zM10 10h1v1h-1zM11 11h1v1h-1zM4 12h1v1h-1zM4 13h1v1h-1zM4 14h1v1h-1z"/><path fill="#fff" d="M5 1h7v1h-7zM5 2h7v1h-7zM13 2h1v1h-1zM7 3h5v1h-5zM7 4h8v1h-8zM5 5h1v1h-1zM8 5h3v1h-3zM12 5h3v1h-3zM4 6h2v1h-2zM8 6h2v1h-2zM11 6h4v1h-4zM3 7h3v1h-3zM9 7h6v1h-6zM3 8h3v1h-3zM9 8h1v1h-1zM13 8h2v1h-2zM4 9h2v1h-2zM8 9h7v1h-7zM5 10h1v1h-1zM8 10h2v1h-2zM11 10h4v1h-4zM7 11h4v1h-4zM12 11h3v1h-3zM7 12h8v1h-8zM5 13h10v1h-10zM5 14h10v1h-10z"/><path fill="#808000" d="M5 3h2v1h-2zM3 4h2v1h-2zM2 5h1v1h-1zM1 6h1v1h-1zM0 7h1v1h-1zM0 8h1v1h-1zM1 9h1v1h-1zM2 10h1v1h-1zM3 11h2v1h-2zM5 12h2v1h-2z"/><path fill="#000" d="M12 3h4v1h-4zM6 4h1v1h-1zM15 4h1v1h-1zM6 5h2v1h-2zM15 5h1v1h-1zM7 6h1v1h-1zM15 6h1v1h-1zM7 7h2v1h-2zM15 7h1v1h-1zM7 8h2v1h-2zM15 8h1v1h-1zM7 9h1v1h-1zM15 9h1v1h-1zM6 10h2v1h-2zM15 10h1v1h-1zM6 11h1v1h-1zM15 11h1v1h-1zM15 12h1v1h-1zM15 13h1v1h-1zM15 14h1v1h-1zM4 15h12v1h-12z"/><path fill="#ff0" d="M5 4h1v1h-1zM3 5h2v1h-2zM2 6h2v1h-2zM6 6h1v1h-1zM1 7h2v1h-2zM6 7h1v1h-1zM1 8h2v1h-2zM6 8h1v1h-1zM2 9h2v1h-2zM6 9h1v1h-1zM3 10h2v1h-2zM5 11h1v1h-1z"/></svg>
<div class="t" style="left:21px;top:233px;transform:scaleX(0.821)">ringin.wav</div>
<div class="t r" style="left:192px;top:233px;transform:scaleX(0.830)">10KB</div>
<div class="t" style="left:285px;top:233px;transform:scaleX(0.862)">Wave Sound</div>
<div class="a" style="left:402px;top:237px;width:1px;height:1px;background:#000"></div>
<svg style="left:2px;top:248px" width="16" height="16" viewBox="0 0 16 16" shape-rendering="crispEdges"><path fill="#808080" d="M4 0h9v1h-9zM4 1h1v1h-1zM12 1h2v1h-2zM4 2h1v1h-1zM12 2h1v1h-1zM14 2h1v1h-1zM4 3h1v1h-1zM11 5h1v1h-1zM10 6h1v1h-1zM10 8h3v1h-3zM10 10h1v1h-1zM11 11h1v1h-1zM4 12h1v1h-1zM4 13h1v1h-1zM4 14h1v1h-1z"/><path fill="#fff" d="M5 1h7v1h-7zM5 2h7v1h-7zM13 2h1v1h-1zM7 3h5v1h-5zM7 4h8v1h-8zM5 5h1v1h-1zM8 5h3v1h-3zM12 5h3v1h-3zM4 6h2v1h-2zM8 6h2v1h-2zM11 6h4v1h-4zM3 7h3v1h-3zM9 7h6v1h-6zM3 8h3v1h-3zM9 8h1v1h-1zM13 8h2v1h-2zM4 9h2v1h-2zM8 9h7v1h-7zM5 10h1v1h-1zM8 10h2v1h-2zM11 10h4v1h-4zM7 11h4v1h-4zM12 11h3v1h-3zM7 12h8v1h-8zM5 13h10v1h-10zM5 14h10v1h-10z"/><path fill="#808000" d="M5 3h2v1h-2zM3 4h2v1h-2zM2 5h1v1h-1zM1 6h1v1h-1zM0 7h1v1h-1zM0 8h1v1h-1zM1 9h1v1h-1zM2 10h1v1h-1zM3 11h2v1h-2zM5 12h2v1h-2z"/><path fill="#000" d="M12 3h4v1h-4zM6 4h1v1h-1zM15 4h1v1h-1zM6 5h2v1h-2zM15 5h1v1h-1zM7 6h1v1h-1zM15 6h1v1h-1zM7 7h2v1h-2zM15 7h1v1h-1zM7 8h2v1h-2zM15 8h1v1h-1zM7 9h1v1h-1zM15 9h1v1h-1zM6 10h2v1h-2zM15 10h1v1h-1zM6 11h1v1h-1zM15 11h1v1h-1zM15 12h1v1h-1zM15 13h1v1h-1zM15 14h1v1h-1zM4 15h12v1h-12z"/><path fill="#ff0" d="M5 4h1v1h-1zM3 5h2v1h-2zM2 6h2v1h-2zM6 6h1v1h-1zM1 7h2v1h-2zM6 7h1v1h-1zM1 8h2v1h-2zM6 8h1v1h-1zM2 9h2v1h-2zM6 9h1v1h-1zM3 10h2v1h-2zM5 11h1v1h-1z"/></svg>
<div class="t" style="left:21px;top:249px;transform:scaleX(0.818)">ringout.wav</div>
<div class="t r" style="left:192px;top:249px;transform:scaleX(0.830)">6KB</div>
<div class="t" style="left:285px;top:249px;transform:scaleX(0.862)">Wave Sound</div>
<div class="a" style="left:402px;top:253px;width:1px;height:1px;background:#000"></div>
<svg style="left:2px;top:264px" width="16" height="16" viewBox="0 0 16 16" shape-rendering="crispEdges"><path fill="#808080" d="M4 0h9v1h-9zM4 1h1v1h-1zM12 1h2v1h-2zM4 2h1v1h-1zM12 2h1v1h-1zM14 2h1v1h-1zM4 3h1v1h-1zM11 5h1v1h-1zM10 6h1v1h-1zM10 8h3v1h-3zM10 10h1v1h-1zM11 11h1v1h-1zM4 12h1v1h-1zM4 13h1v1h-1zM4 14h1v1h-1z"/><path fill="#fff" d="M5 1h7v1h-7zM5 2h7v1h-7zM13 2h1v1h-1zM7 3h5v1h-5zM7 4h8v1h-8zM5 5h1v1h-1zM8 5h3v1h-3zM12 5h3v1h-3zM4 6h2v1h-2zM8 6h2v1h-2zM11 6h4v1h-4zM3 7h3v1h-3zM9 7h6v1h-6zM3 8h3v1h-3zM9 8h1v1h-1zM13 8h2v1h-2zM4 9h2v1h-2zM8 9h7v1h-7zM5 10h1v1h-1zM8 10h2v1h-2zM11 10h4v1h-4zM7 11h4v1h-4zM12 11h3v1h-3zM7 12h8v1h-8zM5 13h10v1h-10zM5 14h10v1h-10z"/><path fill="#808000" d="M5 3h2v1h-2zM3 4h2v1h-2zM2 5h1v1h-1zM1 6h1v1h-1zM0 7h1v1h-1zM0 8h1v1h-1zM1 9h1v1h-1zM2 10h1v1h-1zM3 11h2v1h-2zM5 12h2v1h-2z"/><path fill="#000" d="M12 3h4v1h-4zM6 4h1v1h-1zM15 4h1v1h-1zM6 5h2v1h-2zM15 5h1v1h-1zM7 6h1v1h-1zM15 6h1v1h-1zM7 7h2v1h-2zM15 7h1v1h-1zM7 8h2v1h-2zM15 8h1v1h-1zM7 9h1v1h-1zM15 9h1v1h-1zM6 10h2v1h-2zM15 10h1v1h-1zM6 11h1v1h-1zM15 11h1v1h-1zM15 12h1v1h-1zM15 13h1v1h-1zM15 14h1v1h-1zM4 15h12v1h-12z"/><path fill="#ff0" d="M5 4h1v1h-1zM3 5h2v1h-2zM2 6h2v1h-2zM6 6h1v1h-1zM1 7h2v1h-2zM6 7h1v1h-1zM1 8h2v1h-2zM6 8h1v1h-1zM2 9h2v1h-2zM6 9h1v1h-1zM3 10h2v1h-2zM5 11h1v1h-1z"/></svg>
<div class="t" style="left:21px;top:266px;transform:scaleX(0.843)">tada.wav</div>
<div class="t r" style="left:192px;top:266px;transform:scaleX(0.830)">28KB</div>
<div class="t" style="left:285px;top:266px;transform:scaleX(0.862)">Wave Sound</div>
<div class="a" style="left:402px;top:270px;width:1px;height:1px;background:#000"></div>
<svg style="left:2px;top:281px" width="16" height="16" viewBox="0 0 16 16" shape-rendering="crispEdges"><path fill="#808080" d="M4 0h9v1h-9zM4 1h1v1h-1zM12 1h2v1h-2zM4 2h1v1h-1zM12 2h1v1h-1zM14 2h1v1h-1zM4 3h1v1h-1zM11 5h1v1h-1zM10 6h1v1h-1zM10 8h3v1h-3zM10 10h1v1h-1zM11 11h1v1h-1zM4 12h1v1h-1zM4 13h1v1h-1zM4 14h1v1h-1z"/><path fill="#fff" d="M5 1h7v1h-7zM5 2h7v1h-7zM13 2h1v1h-1zM7 3h5v1h-5zM7 4h8v1h-8zM5 5h1v1h-1zM8 5h3v1h-3zM12 5h3v1h-3zM4 6h2v1h-2zM8 6h2v1h-2zM11 6h4v1h-4zM3 7h3v1h-3zM9 7h6v1h-6zM3 8h3v1h-3zM9 8h1v1h-1zM13 8h2v1h-2zM4 9h2v1h-2zM8 9h7v1h-7zM5 10h1v1h-1zM8 10h2v1h-2zM11 10h4v1h-4zM7 11h4v1h-4zM12 11h3v1h-3zM7 12h8v1h-8zM5 13h10v1h-10zM5 14h10v1h-10z"/><path fill="#808000" d="M5 3h2v1h-2zM3 4h2v1h-2zM2 5h1v1h-1zM1 6h1v1h-1zM0 7h1v1h-1zM0 8h1v1h-1zM1 9h1v1h-1zM2 10h1v1h-1zM3 11h2v1h-2zM5 12h2v1h-2z"/><path fill="#000" d="M12 3h4v1h-4zM6 4h1v1h-1zM15 4h1v1h-1zM6 5h2v1h-2zM15 5h1v1h-1zM7 6h1v1h-1zM15 6h1v1h-1zM7 7h2v1h-2zM15 7h1v1h-1zM7 8h2v1h-2zM15 8h1v1h-1zM7 9h1v1h-1zM15 9h1v1h-1zM6 10h2v1h-2zM15 10h1v1h-1zM6 11h1v1h-1zM15 11h1v1h-1zM15 12h1v1h-1zM15 13h1v1h-1zM15 14h1v1h-1zM4 15h12v1h-12z"/><path fill="#ff0" d="M5 4h1v1h-1zM3 5h2v1h-2zM2 6h2v1h-2zM6 6h1v1h-1zM1 7h2v1h-2zM6 7h1v1h-1zM1 8h2v1h-2zM6 8h1v1h-1zM2 9h2v1h-2zM6 9h1v1h-1zM3 10h2v1h-2zM5 11h1v1h-1z"/></svg>
<div class="t" style="left:21px;top:282px;transform:scaleX(0.839)">The Microsoft Sound.wav</div>
<div class="t r" style="left:192px;top:282px;transform:scaleX(0.830)">133KB</div>
<div class="t" style="left:285px;top:282px;transform:scaleX(0.862)">Wave Sound</div>
<div class="a" style="left:402px;top:286px;width:1px;height:1px;background:#000"></div>
<svg style="left:2px;top:297px" width="16" height="16" viewBox="0 0 16 16" shape-rendering="crispEdges"><path fill="#808080" d="M4 0h9v1h-9zM4 1h1v1h-1zM12 1h2v1h-2zM4 2h1v1h-1zM12 2h1v1h-1zM14 2h1v1h-1zM4 3h1v1h-1zM11 5h1v1h-1zM10 6h1v1h-1zM10 8h3v1h-3zM10 10h1v1h-1zM11 11h1v1h-1zM4 12h1v1h-1zM4 13h1v1h-1zM4 14h1v1h-1z"/><path fill="#fff" d="M5 1h7v1h-7zM5 2h7v1h-7zM13 2h1v1h-1zM7 3h5v1h-5zM7 4h8v1h-8zM5 5h1v1h-1zM8 5h3v1h-3zM12 5h3v1h-3zM4 6h2v1h-2zM8 6h2v1h-2zM11 6h4v1h-4zM3 7h3v1h-3zM9 7h6v1h-6zM3 8h3v1h-3zM9 8h1v1h-1zM13 8h2v1h-2zM4 9h2v1h-2zM8 9h7v1h-7zM5 10h1v1h-1zM8 10h2v1h-2zM11 10h4v1h-4zM7 11h4v1h-4zM12 11h3v1h-3zM7 12h8v1h-8zM5 13h10v1h-10zM5 14h10v1h-10z"/><path fill="#808000" d="M5 3h2v1h-2zM3 4h2v1h-2zM2 5h1v1h-1zM1 6h1v1h-1zM0 7h1v1h-1zM0 8h1v1h-1zM1 9h1v1h-1zM2 10h1v1h-1zM3 11h2v1h-2zM5 12h2v1h-2z"/><path fill="#000" d="M12 3h4v1h-4zM6 4h1v1h-1zM15 4h1v1h-1zM6 5h2v1h-2zM15 5h1v1h-1zM7 6h1v1h-1zM15 6h1v1h-1zM7 7h2v1h-2zM15 7h1v1h-1zM7 8h2v1h-2zM15 8h1v1h-1zM7 9h1v1h-1zM15 9h1v1h-1zM6 10h2v1h-2zM15 10h1v1h-1zM6 11h1v1h-1zM15 11h1v1h-1zM15 12h1v1h-1zM15 13h1v1h-1zM15 14h1v1h-1zM4 15h12v1h-12z"/><path fill="#ff0" d="M5 4h1v1h-1zM3 5h2v1h-2zM2 6h2v1h-2zM6 6h1v1h-1zM1 7h2v1h-2zM6 7h1v1h-1zM1 8h2v1h-2zM6 8h1v1h-1zM2 9h2v1h-2zM6 9h1v1h-1zM3 10h2v1h-2zM5 11h1v1h-1z"/></svg>
<div class="t" style="left:21px;top:299px;transform:scaleX(0.846)">Windows NT Logoff Sound.wav</div>
<div class="t r" style="left:192px;top:299px;transform:scaleX(0.830)">430KB</div>
<div class="t" style="left:285px;top:299px;transform:scaleX(0.862)">Wave Sound</div>
<div class="a" style="left:402px;top:303px;width:1px;height:1px;background:#000"></div>
<svg style="left:2px;top:314px" width="16" height="16" viewBox="0 0 16 16" shape-rendering="crispEdges"><path fill="#808080" d="M4 0h9v1h-9zM4 1h1v1h-1zM12 1h2v1h-2zM4 2h1v1h-1zM12 2h1v1h-1zM14 2h1v1h-1zM4 3h1v1h-1zM11 5h1v1h-1zM10 6h1v1h-1zM10 8h3v1h-3zM10 10h1v1h-1zM11 11h1v1h-1zM4 12h1v1h-1zM4 13h1v1h-1zM4 14h1v1h-1z"/><path fill="#fff" d="M5 1h7v1h-7zM5 2h7v1h-7zM13 2h1v1h-1zM7 3h5v1h-5zM7 4h8v1h-8zM5 5h1v1h-1zM8 5h3v1h-3zM12 5h3v1h-3zM4 6h2v1h-2zM8 6h2v1h-2zM11 6h4v1h-4zM3 7h3v1h-3zM9 7h6v1h-6zM3 8h3v1h-3zM9 8h1v1h-1zM13 8h2v1h-2zM4 9h2v1h-2zM8 9h7v1h-7zM5 10h1v1h-1zM8 10h2v1h-2zM11 10h4v1h-4zM7 11h4v1h-4zM12 11h3v1h-3zM7 12h8v1h-8zM5 13h10v1h-10zM5 14h10v1h-10z"/><path fill="#808000" d="M5 3h2v1h-2zM3 4h2v1h-2zM2 5h1v1h-1zM1 6h1v1h-1zM0 7h1v1h-1zM0 8h1v1h-1zM1 9h1v1h-1zM2 10h1v1h-1zM3 11h2v1h-2zM5 12h2v1h-2z"/><path fill="#000" d="M12 3h4v1h-4zM6 4h1v1h-1zM15 4h1v1h-1zM6 5h2v1h-2zM15 5h1v1h-1zM7 6h1v1h-1zM15 6h1v1h-1zM7 7h2v1h-2zM15 7h1v1h-1zM7 8h2v1h-2zM15 8h1v1h-1zM7 9h1v1h-1zM15 9h1v1h-1zM6 10h2v1h-2zM15 10h1v1h-1zM6 11h1v1h-1zM15 11h1v1h-1zM15 12h1v1h-1zM15 13h1v1h-1zM15 14h1v1h-1zM4 15h12v1h-12z"/><path fill="#ff0" d="M5 4h1v1h-1zM3 5h2v1h-2zM2 6h2v1h-2zM6 6h1v1h-1zM1 7h2v1h-2zM6 7h1v1h-1zM1 8h2v1h-2zM6 8h1v1h-1zM2 9h2v1h-2zM6 9h1v1h-1zM3 10h2v1h-2zM5 11h1v1h-1z"/></svg>
</div>
<div class="track" style="left:605px;top:85px;width:16px;height:318px"></div>
<div class="btn" style="left:605px;top:85px;width:16px;height:16px"></div>
<svg style="left:609px;top:91px" width="7" height="4" viewBox="0 0 7 4" shape-rendering="crispEdges"><path fill="#000" d="M3 0h1v1h-1zM2 1h3v1h-3zM1 2h5v1h-5zM0 3h7v1h-7z"/></svg>
<div class="btn" style="left:605px;top:101px;width:16px;height:271px"></div>
<div class="btn" style="left:605px;top:388px;width:16px;height:15px"></div>
<svg style="left:609px;top:393px" width="7" height="4" viewBox="0 0 7 4" shape-rendering="crispEdges"><path fill="#000" d="M0 0h7v1h-7zM1 1h5v1h-5zM2 2h3v1h-3zM3 3h1v1h-1z"/></svg>
<div class="track" style="left:202px;top:403px;width:403px;height:16px"></div>
<div class="btn" style="left:202px;top:403px;width:16px;height:16px"></div>
<svg style="left:208px;top:407px" width="4" height="7" viewBox="0 0 4 7" shape-rendering="crispEdges"><path fill="#000" d="M3 0h1v1h-1zM2 1h2v1h-2zM1 2h3v1h-3zM0 3h4v1h-4zM1 4h3v1h-3zM2 5h2v1h-2zM3 6h1v1h-1z"/></svg>
<div class="btn" style="left:218px;top:403px;width:263px;height:16px"></div>
<div class="btn" style="left:590px;top:403px;width:15px;height:16px"></div>
<svg style="left:595px;top:407px" width="4" height="7" viewBox="0 0 4 7" shape-rendering="crispEdges"><path fill="#000" d="M0 0h1v1h-1zM0 1h2v1h-2zM0 2h3v1h-3zM0 3h4v1h-4zM0 4h3v1h-3zM0 5h2v1h-2zM0 6h1v1h-1z"/></svg>
<div class="a" style="left:605px;top:403px;width:16px;height:16px;background:#c0c0c0"></div>
<div class="lbl" style="left:0px;top:423px;width:140px;height:16px"></div>
<div class="t" style="left:3px;top:423px;transform:scaleX(0.801)">19 object(s)</div>
<div class="lbl" style="left:142px;top:423px;width:482px;height:16px"></div>
<div class="t" style="left:146px;top:423px;transform:scaleX(0.837)">1.47MB (Disk free space: 995MB)</div>
<div class="a" style="left:0px;top:441px;width:623px;height:1px;background:#fff"></div>
</div>
</body></html>
